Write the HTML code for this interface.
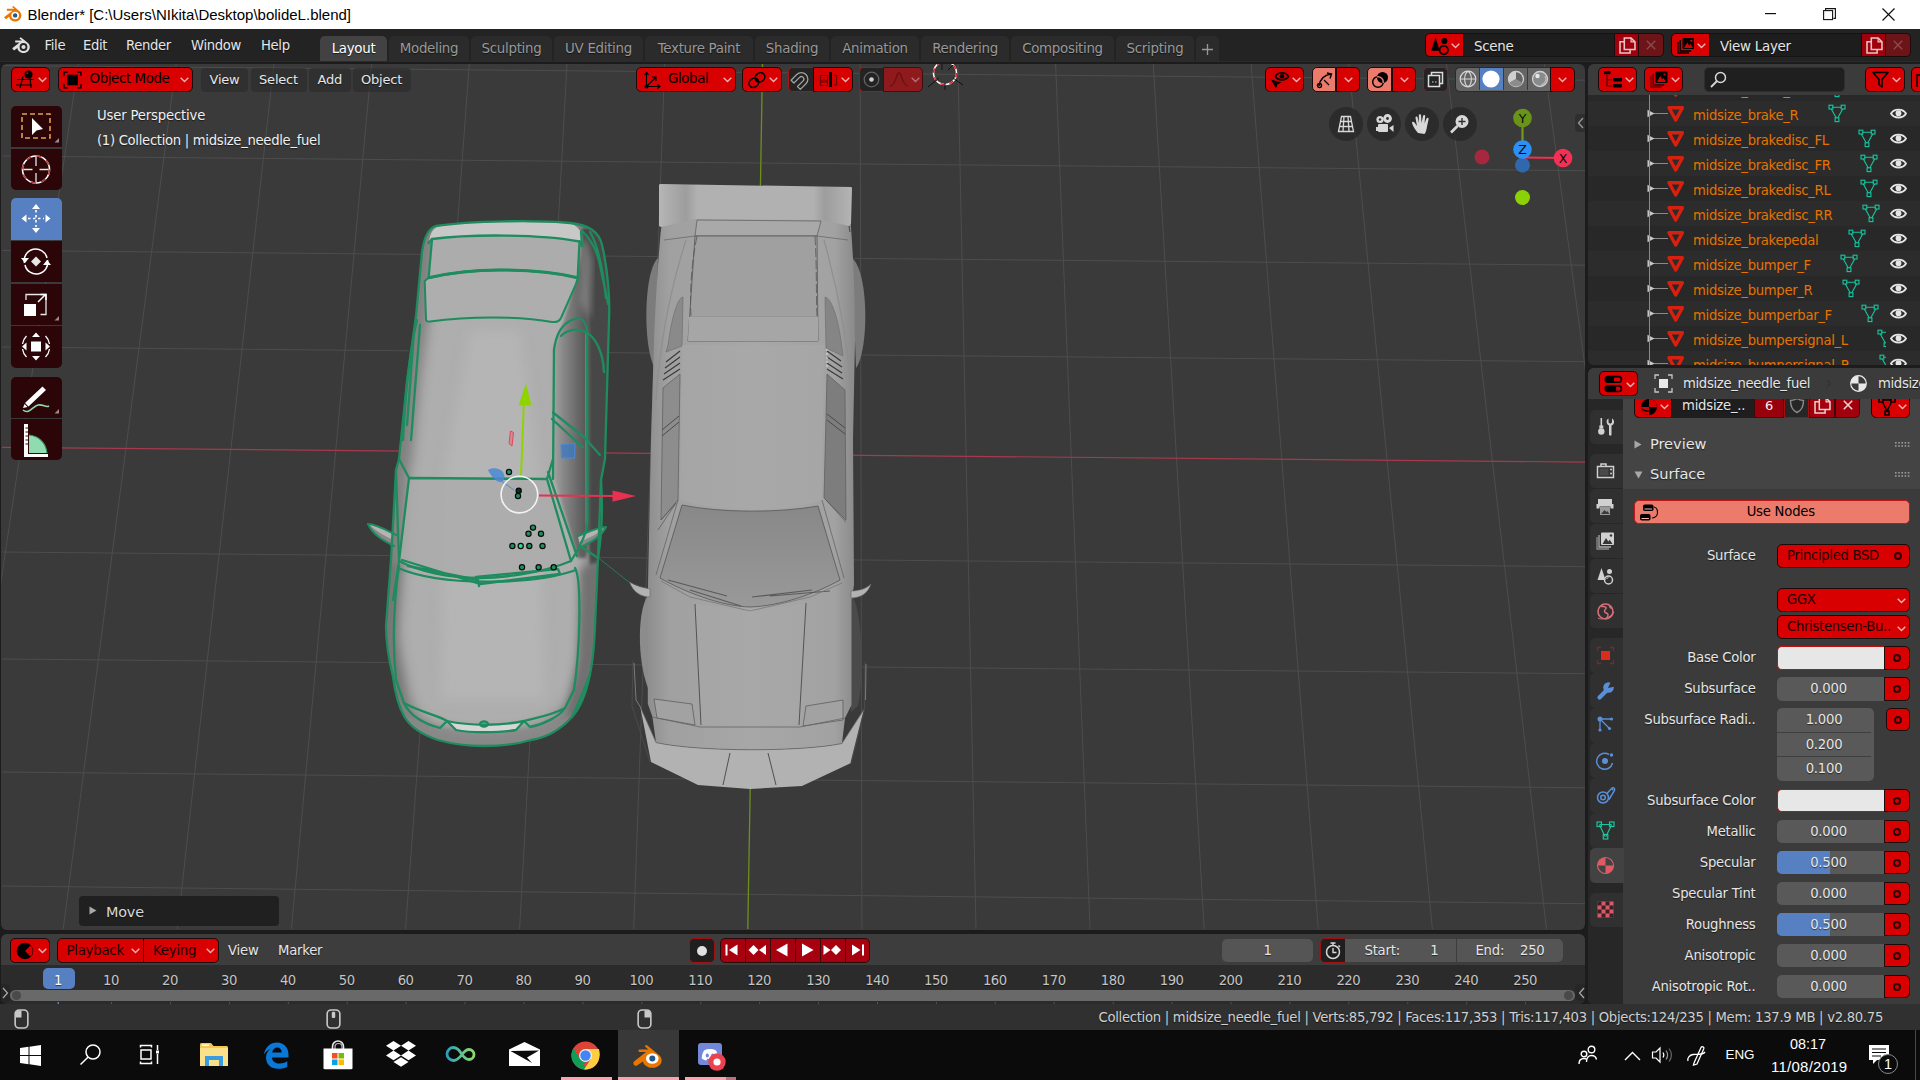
<!DOCTYPE html>
<html lang="en">
<head>
<meta charset="utf-8">
<title>Blender</title>
<style>
*{box-sizing:border-box;margin:0;padding:0}
html,body{width:1920px;height:1080px;overflow:hidden;background:#1c1c1c}
body{position:relative;font-family:"DejaVu Sans","Liberation Sans",sans-serif;font-size:13px;letter-spacing:-0.21px;color:#e6e6e6;-webkit-font-smoothing:antialiased}
.abs{position:absolute}
svg{position:absolute;overflow:visible}
.t{position:absolute;white-space:nowrap;line-height:16px}
.sh{text-shadow:0 1px 1px rgba(0,0,0,.55)}
/* title bar */
#title{left:0;top:0;width:1920px;height:29px;background:#fff;color:#000;font-family:"Liberation Sans",sans-serif;letter-spacing:0}
/* top bar */
#topbar{left:0;top:29px;width:1920px;height:33px;background:#232323}
.tab{position:absolute;top:7px;height:26px;background:#2b2b2b;border-radius:5px 5px 0 0;color:#989898;text-align:center;line-height:25px;font-size:13.4px;letter-spacing:-0.3px}
.tab.on{background:#424242;color:#fff}
.rb{position:absolute;background:#d80000;border:1px solid #1d0a0a;border-radius:5px;color:#000}
.mb{position:absolute;background:rgba(40,40,40,.55);border-radius:4px;color:#e6e6e6;text-align:center;line-height:23px;height:24px;top:68px}
/* viewport */
#vp{left:1px;top:64px;width:1584px;height:866px;background:#3a3a3a;border-radius:6px;overflow:hidden}
/* outliner */
#ol{left:1588px;top:64px;width:332px;height:301px;background:#282828;border-radius:6px 0 0 6px;overflow:hidden}
#olh{left:0;top:0;width:331px;height:31px;background:#3d3d3d}
.row{position:absolute;left:0;width:331px;height:25px}
.row.a{background:#2b2b2b}
.ot{position:absolute;left:104px;color:#e57300;line-height:25px;white-space:nowrap;font-size:13.2px;letter-spacing:-0.3px}
/* properties */
#pr{left:1588px;top:368px;width:332px;height:636px;background:#424242;border-radius:6px 0 0 6px;overflow:hidden}
.lab{position:absolute;right:165px;white-space:nowrap;line-height:22px;color:#e6e6e6;text-align:right}
.fld{position:absolute;left:187px;width:108px;height:22px;background:#595959;border-radius:4px 0 0 4px;text-align:center;line-height:22px;color:#e6e6e6;overflow:hidden}
.dot{position:absolute;left:295px;width:26px;height:22px;background:#d80000;border:1px solid #1d0a0a;border-left:none;border-radius:0 5px 5px 0}
.dot:after{content:"";position:absolute;left:7px;top:6px;width:8px;height:8px;border:1.6px solid #3a0000;border-radius:50%}
/* timeline */
#tl{left:1px;top:934px;width:1584px;height:70px;background:#2b2b2b;border-radius:6px;overflow:hidden}
#tlh{left:0;top:0;width:1584px;height:34px;background:#3d3d3d}
.fn{position:absolute;top:39px;color:#c8c8c8;font-size:14px;letter-spacing:-0.2px;line-height:16px;transform:translateX(-50%)}
/* status */
#st{left:0;top:1004px;width:1920px;height:26px;background:#303030}
/* taskbar */
#tb{left:0;top:1030px;width:1920px;height:50px;background:#0b0b0b;font-family:"Liberation Sans",sans-serif;letter-spacing:0;color:#fff}
</style>
</head>
<body>
<!-- TITLE BAR -->
<div id="title" class="abs">
<svg id="ticon" style="left:3px;top:6px" width="19" height="17" viewBox="0 0 20 18"><path d="M1 12 L10 5 H4 V3 H12 L9.5 1 L11 0 L18 6 C20 8.5 20 12 17.5 14.5 C15 17 10.5 17 8 14.5 C7 13.5 6.5 12.5 6.5 11.5 L3 14 Z" fill="#ea7600"/><circle cx="12.8" cy="10" r="4" fill="#fff"/><circle cx="12.8" cy="10" r="2.3" fill="#265787"/></svg>
<div class="t" style="left:27.5px;top:5px;font-size:15px;line-height:19px">Blender* [C:\Users\NIkita\Desktop\bolideL.blend]</div>
<svg style="left:1765px;top:13px" width="12" height="2"><rect width="11" height="1.2" fill="#111"/></svg>
<svg style="left:1823px;top:8px" width="13" height="13" viewBox="0 0 13 13" fill="none" stroke="#111" stroke-width="1.1"><rect x=".6" y="2.6" width="9" height="9"/><path d="M2.6 2.6V.6h9.8v9.8h-2"/></svg>
<svg style="left:1882px;top:8px" width="13" height="13" viewBox="0 0 13 13" stroke="#111" stroke-width="1.2"><path d="M.5.5l12 12M12.5.5l-12 12"/></svg>
</div>

<!-- TOP BAR -->
<div id="topbar" class="abs">
<!--TOPBAR-->
<svg style="left:11px;top:8px" width="20" height="17" viewBox="0 0 20 17"><path d="M1.2 11.2 L8.6 5.4 H4.2 V3.6 H11 L8.4 1.5 L9.8 .3 L17 6 C19.4 8.2 19.4 11.8 17 14.2 C14.6 16.6 10.4 16.6 8 14.2 C7 13.2 6.4 12.1 6.4 11 L3 13.6 Z" fill="#e0e0e0"/><circle cx="12.5" cy="10" r="3.9" fill="#232323"/><circle cx="12.5" cy="10" r="2.1" fill="#e0e0e0"/></svg>
<div class="t sh" style="left:44.5px;top:9px;font-size:13.2px;letter-spacing:-0.35px">File</div>
<div class="t sh" style="left:83px;top:9px;font-size:13.2px;letter-spacing:-0.35px">Edit</div>
<div class="t sh" style="left:126px;top:9px;font-size:13.2px;letter-spacing:-0.35px">Render</div>
<div class="t sh" style="left:191px;top:9px;font-size:13.2px;letter-spacing:-0.35px">Window</div>
<div class="t sh" style="left:261px;top:9px;font-size:13.2px;letter-spacing:-0.35px">Help</div>
<div class="tab sh on" style="left:320px;width:67px">Layout</div>
<div class="tab sh" style="left:389px;width:80px">Modeling</div>
<div class="tab sh" style="left:471px;width:81px">Sculpting</div>
<div class="tab sh" style="left:554px;width:89px">UV Editing</div>
<div class="tab sh" style="left:645px;width:108px">Texture Paint</div>
<div class="tab sh" style="left:755px;width:74px">Shading</div>
<div class="tab sh" style="left:831px;width:88px">Animation</div>
<div class="tab sh" style="left:921px;width:88px">Rendering</div>
<div class="tab sh" style="left:1011px;width:103px">Compositing</div>
<div class="tab sh" style="left:1116px;width:78px">Scripting</div>
<div class="tab" style="left:1196px;width:23px"><svg style="left:6px;top:8px" width="11" height="11" viewBox="0 0 11 11" stroke="#989898" stroke-width="1.3"><path d="M5.5 0v11M0 5.500h11"/></svg></div>
<div class="rb" style="left:1425px;top:4px;width:39px;height:24px;border-radius:5px 0 0 5px"><svg style="left:4px;top:2px" width="21" height="20" viewBox="0 0 18 17"><path d="M4.800 1L1 12.500h7.200z" fill="#000"/><circle cx="12.300" cy="4.300" r="2.600" fill="#000"/><circle cx="11.800" cy="12" r="3.600" fill="none" stroke="#000" stroke-width="1.500"/></svg><svg style="left:25px;top:9px" width="9" height="6" viewBox="0 0 9 6" fill="none" stroke="#f3b0b0" stroke-width="1.4"><path d="M.7.8l3.800 3.700L8.300.800"/></svg></div><div class="abs" style="left:1464px;top:4px;width:150px;height:24px;background:#1d1d1d;border-top:1px solid #141414;border-bottom:1px solid #141414"><div class="t sh" style="left:10px;top:4.500px;font-size:13.4px;letter-spacing:-.25px;color:#e6e6e6">Scene</div></div><div class="rb" style="left:1614px;top:4px;width:25px;height:24px;border-radius:0;background:#a0000c"><svg style="left:2.500px;top:2px" width="19" height="19" viewBox="0 0 16 16" fill="none" stroke="#e9c6c6" stroke-width="1.300"><path d="M5.300 11.300V1.700h5.700l3.300 3.300v6.300z"/><path d="M11 1.700V5h3.300" stroke-width="1"/><path d="M5.300 4.800H1.700v9.500h8.500v-3"/></svg></div><div class="rb" style="left:1639px;top:4px;width:25px;height:24px;border-radius:0 5px 5px 0;background:#6d1418;border-left:none"><svg style="left:7px;top:6px" width="10" height="10" viewBox="0 0 10 10" stroke="#8d4a4a" stroke-width="1.4"><path d="M.8.800l8.400 8.400M9.200.800L.8 9.200"/></svg></div>
<div class="rb" style="left:1671px;top:4px;width:39px;height:24px;border-radius:5px 0 0 5px"><svg style="left:5px;top:3px" width="18" height="17" viewBox="0 0 18 17"><path d="M1 5v11h11" fill="none" stroke="#000" stroke-width="1.300"/><path d="M3.200 3v11h11" fill="none" stroke="#000" stroke-width="1.300"/><rect x="5.500" y="1" width="11.500" height="11" rx="1" fill="#000"/><path d="M7 11l3.200-5.500 2 3 1.300-1.500 2.500 4z" fill="#d80000"/><circle cx="14.300" cy="3.800" r="1.100" fill="#d80000"/></svg><svg style="left:25px;top:9px" width="9" height="6" viewBox="0 0 9 6" fill="none" stroke="#f3b0b0" stroke-width="1.4"><path d="M.7.8l3.800 3.700L8.300.800"/></svg></div><div class="abs" style="left:1710px;top:4px;width:151px;height:24px;background:#1d1d1d;border-top:1px solid #141414;border-bottom:1px solid #141414"><div class="t sh" style="left:10px;top:4.500px;font-size:13.4px;letter-spacing:-.25px;color:#e6e6e6">View Layer</div></div><div class="rb" style="left:1861px;top:4px;width:25px;height:24px;border-radius:0;background:#a0000c"><svg style="left:2.500px;top:2px" width="19" height="19" viewBox="0 0 16 16" fill="none" stroke="#e9c6c6" stroke-width="1.300"><path d="M5.300 11.300V1.700h5.700l3.300 3.300v6.300z"/><path d="M11 1.700V5h3.300" stroke-width="1"/><path d="M5.300 4.800H1.700v9.500h8.500v-3"/></svg></div><div class="rb" style="left:1886px;top:4px;width:25px;height:24px;border-radius:0 5px 5px 0;background:#6d1418;border-left:none"><svg style="left:7px;top:6px" width="10" height="10" viewBox="0 0 10 10" stroke="#8d4a4a" stroke-width="1.4"><path d="M.8.800l8.400 8.400M9.200.800L.8 9.200"/></svg></div>
<!--/TOPBAR-->
</div>

<div id="tbline" class="abs" style="left:0;top:61px;width:1920px;height:1px;background:#2b2b2b"></div>
<!-- VIEWPORT -->
<div id="vp" class="abs">
<!--VIEWPORT-->
<div class="abs" style="left:-1px;top:-64px;width:1920px;height:1080px">
<svg style="left:0;top:0" width="1920" height="1080" viewBox="0 0 1920 1080">
<defs>
<linearGradient id="gL" x1="0" x2="1" y1="0" y2="0"><stop offset="0" stop-color="#8f8f8f"/><stop offset=".12" stop-color="#a6a6a6"/><stop offset=".5" stop-color="#adadad"/><stop offset=".72" stop-color="#9c9c9c"/><stop offset=".82" stop-color="#6f6f6f"/><stop offset=".9" stop-color="#4e4e4e"/><stop offset="1" stop-color="#6a6a6a"/></linearGradient>
<linearGradient id="gHood" x1="0" x2="1" y1="0" y2="0"><stop offset="0" stop-color="#8a8a8a"/><stop offset=".15" stop-color="#a9a9a9"/><stop offset=".55" stop-color="#b0b0b0"/><stop offset=".85" stop-color="#9a9a9a"/><stop offset="1" stop-color="#787878"/></linearGradient>
<linearGradient id="gR" x1="0" x2="1" y1="0" y2="0"><stop offset="0" stop-color="#8e8e8e"/><stop offset=".1" stop-color="#a0a0a0"/><stop offset=".5" stop-color="#a7a7a7"/><stop offset=".9" stop-color="#a2a2a2"/><stop offset="1" stop-color="#8a8a8a"/></linearGradient>
<linearGradient id="gW" x1="0" x2="1" y1="0" y2="0"><stop offset="0" stop-color="#b6b6b6"/><stop offset=".14" stop-color="#9d9d9d"/><stop offset=".2" stop-color="#b1b1b1"/><stop offset=".8" stop-color="#b1b1b1"/><stop offset=".86" stop-color="#9d9d9d"/><stop offset="1" stop-color="#b4b4b4"/></linearGradient>
<linearGradient id="gWS" x1="0" x2="0" y1="0" y2="1"><stop offset="0" stop-color="#888"/><stop offset="1" stop-color="#999"/></linearGradient>
</defs>
<path d="M-19.3 64L-165.1 929M78.4 64L-51.0 929M176.1 64L63.2 929M273.9 64L177.3 929M371.6 64L291.4 929M469.3 64L405.5 929M567.0 64L519.6 929M664.7 64L633.7 929M860.2 64L861.9 929M957.9 64L976.0 929M1055.6 64L1090.1 929M1153.3 64L1204.2 929M1251.1 64L1318.3 929M1348.8 64L1432.4 929M1446.5 64L1546.5 929M1544.2 64L1660.6 929M2 65.5L1586 80.2M2 156.0L1586 170.7M2 250.5L1586 265.2M2 347.0L1586 361.7M2 552.0L1586 566.7M2 659.0L1586 673.7M2 772.0L1586 787.8M2 886.0L1586 903.7" stroke="#4d4d4d" stroke-width="1" fill="none"/>
<path d="M2 447.3L1586 462.1" stroke="#a63a4d" stroke-width="1.2"/>
<path d="M762.5 64L747.8 929" stroke="#6d8f1e" stroke-width="1.3"/>
<g stroke-linejoin="round">
<path d="M658 258C643 272 643 350 655 368Z" fill="#7c7c7c"/><path d="M852 258C869 272 869 350 856 368Z" fill="#7c7c7c"/>
<path d="M649 594C637 608 637 660 648 688Z" fill="#8c8c8c"/><path d="M851 594C863 608 864 680 858 706L851 712Z" fill="#4a4a4a"/>
<path d="M662 216L850 216C853 250 855 290 855 340L853 440L854 585L851.500 600L851.500 705L845 718L842 743.500C800 752 700 752 656 742.600L652.400 716.700L647.800 703.700L647.800 600L648 585L651 440L654 340C656 290 659 250 662 216Z" fill="url(#gR)"/>
<path d="M640.400 707.400L656 742.600C700 752 800 752 842 743.500L864.400 709L851 763L802 786L750 789L698 785L651 762Z" fill="#b2b2b2"/>
<path d="M659 185C659 184 660 184 661 184L851 187C852 187 852 188 852 189L851 224L849 226L823 220L695 219L661 227L659 226Z" fill="url(#gW)"/>
<path d="M661 227L660 232M849 226L850 232" stroke="#444" stroke-width="1"/>
<path d="M697 220L821 221L817 236L695 236Z" fill="#a9a9a9" stroke="#5a5a5a" stroke-width=".7"/>
<path d="M695 236L817 236L818 341L688 341Z" fill="#a0a0a0" stroke="#555" stroke-width=".8"/>
<path d="M690 317L818 317" stroke="#8d8d8d" stroke-width="1"/><path d="M689 317h129v24h-130z" fill="#a6a6a6"/>
<path d="M697 236C690 270 690 300 691 316M815 236C817 270 816 300 817 316" stroke="#555" stroke-width=".8" fill="none" stroke-dasharray="9 3"/>
<path d="M664 240L695 236M848 240L817 236" stroke="#6a6a6a" stroke-width=".8"/>
<path d="M686 240C670 290 660 340 656 400M824 240C838 290 848 340 852 400" stroke="#8f8f8f" stroke-width="1.2" fill="none"/>
<path d="M683 297C678 298 672 315 668 345L666 352L682 346Z" fill="#8a8a8a" stroke="#6a6a6a" stroke-width=".6"/>
<path d="M825 297C831 298 838 315 842 348L843 356L826 348Z" fill="#858585" stroke="#6a6a6a" stroke-width=".6"/>
<path d="M666 362L680 351M665 368L680 357M664 374L680 363M663 380L680 369" stroke="#3a3a3a" stroke-width="1.2"/>
<path d="M827 351L841 361M827 357L842 367M827 363L842 373M827 369L843 379" stroke="#3a3a3a" stroke-width="1.2"/>
<path d="M827 349v20" stroke="#e0e0e0" stroke-width="1" stroke-dasharray="2 2"/>
<path d="M663 388L680 374L678 500L661 520Z" fill="#8d8d8d" stroke="#5c5c5c" stroke-width=".7"/>
<path d="M827 374L845 390L846 520L824 498Z" fill="#7d7d7d" stroke="#5c5c5c" stroke-width=".7"/>
<path d="M662 430L679 416M662 436L679 422M845 428L827 414M845 434L827 420" stroke="#4a4a4a" stroke-width="1"/>
<path d="M682 345L824 345L822 500C790 512 715 512 680 500Z" fill="#a9a9a9" opacity=".55"/>
<path d="M682 505C720 513 780 513 818 506L840 580C815 594 780 606 750 607C720 606 685 592 660 578Z" fill="url(#gWS)" stroke="#555" stroke-width=".8"/>
<path d="M678 500L656 575M822 500L844 578" stroke="#666" stroke-width=".8"/>
<path d="M661 520L676 503L658 530M846 522L826 500" stroke="#555" stroke-width=".7" fill="none"/>
<path d="M668 580L727 596M690 590L741 606M752 597L812 590M770 596L830 591" stroke="#5a5a5a" stroke-width="1.1"/>
<path d="M661 581L690 597L750 611L810 597L842 583" stroke="#777" stroke-width=".8" fill="none"/>
<path d="M695 604L750 611L806 603L799 725L701 725Z" fill="#a8a8a8" opacity=".6"/>
<path d="M695 604L701 725M806 603L799 725" stroke="#4a4a4a" stroke-width=".9"/>
<path d="M629.500 582C636 586 644 588 650 589L650 597C641 597 633 592 629.500 582Z" fill="#b2b2b2" stroke="#666" stroke-width=".6"/>
<path d="M871 584C866 589 858 591 851 591L851 598C861 598 868 593 871 584Z" fill="#b2b2b2" stroke="#666" stroke-width=".6"/>
<path d="M654 699L692 704L695 725L657 718Z" fill="#a2a2a2" stroke="#555" stroke-width=".7"/>
<path d="M806 706L843 700L843 720L803 726Z" fill="#a2a2a2" stroke="#555" stroke-width=".7"/>
<path d="M652.400 717L700 727L800 727L845 718M656 742.600C700 752 800 752 842 743.500" stroke="#666" stroke-width=".8" fill="none"/>
<path d="M640.400 707.400L656 742.600M842 743.500L864.400 709" stroke="#777" stroke-width=".7" fill="none"/>
<path d="M730 753L723 785M768 753L776 785" stroke="#444" stroke-width=".9"/>
<path d="M633 661L632 706L650 762M865 662L864.500 709L851 763" stroke="#484848" stroke-width="1.200" fill="none"/>
<path d="M634 663L636 700L641 708M866 664L865.500 700" stroke="#8a8a8a" stroke-width=".8" fill="none"/>
</g>
<g>
<defs><clipPath id="cpL"><path d="M436 226C470 220.500 540 220 570 223C590 225 599 232 602 245C608 270 610 300 609 320L605 459L601 480L598 558L595 626C594 650 592 665 590 674C586 695 580 708 572 717C560 730 545 738 531 740C515 745 500 746 484 746C468 746 452 744 438 740C420 734 410 727 404 716C398 705 395 692 393 677C389 660 386 645 386 626L391 560L396 470L399 459L407 381L416 316L422 252C424 238 428 228 436 226Z"/></clipPath><filter id="bl7" x="-20%" y="-20%" width="140%" height="140%"><feGaussianBlur stdDeviation="6"/></filter><filter id="bl3" x="-20%" y="-20%" width="140%" height="140%"><feGaussianBlur stdDeviation="3.500"/></filter><filter id="bl2" x="-20%" y="-20%" width="140%" height="140%"><feGaussianBlur stdDeviation="1.800"/></filter></defs>
<path d="M368 524C376 524 388 531 396 535L395 547C384 541 373 535 368 524Z" fill="#b4b4b4"/><path d="M368 524C374 534 384 541 395 547L396 541C386 537 376 531 368 524Z" fill="#8a8a8a"/>
<path d="M606 527C598 527 586 533 578 536L580 547C591 542 601 537 606 527Z" fill="#b4b4b4"/><path d="M606 527C601 537 591 542 580 547L579 542C590 538 599 533 606 527Z" fill="#8a8a8a"/>
<path d="M436 226C470 220.500 540 220 570 223C590 225 599 232 602 245C608 270 610 300 609 320L605 459L601 480L598 558L595 626C594 650 592 665 590 674C586 695 580 708 572 717C560 730 545 738 531 740C515 745 500 746 484 746C468 746 452 744 438 740C420 734 410 727 404 716C398 705 395 692 393 677C389 660 386 645 386 626L391 560L396 470L399 459L407 381L416 316L422 252C424 238 428 228 436 226Z" fill="#aeaeae"/>
<g clip-path="url(#cpL)">
<path d="M436 226C470 220.500 540 220 570 223C590 225 599 232 602 245C608 270 610 300 609 320L605 459L601 480L598 558L595 626C594 650 592 665 590 674C586 695 580 708 572 717C560 730 545 738 531 740C515 745 500 746 484 746C468 746 452 744 438 740C420 734 410 727 404 716C398 705 395 692 393 677C389 660 386 645 386 626L391 560L396 470L399 459L407 381L416 316L422 252C424 238 428 228 436 226Z" fill="none" stroke="#5c5c5c" stroke-width="26" opacity=".55" filter="url(#bl7)"/>
<path d="M470 330L520 330L540 470L545 700L440 700L445 470Z" fill="#bcbcbc" opacity=".5" filter="url(#bl7)"/>
<defs><linearGradient id="gGl" gradientUnits="userSpaceOnUse" x1="553" x2="586" y1="0" y2="0"><stop offset="0" stop-color="#a2a2a2"/><stop offset=".35" stop-color="#858585"/><stop offset="1" stop-color="#565656"/></linearGradient></defs>
<path d="M582 228L590 228L603 240L612 305L608 460L604 500L601 562L590 565L588 530L588 330L582 260Z" fill="#474747" filter="url(#bl2)"/>
<path d="M570 300L582 250L590 330L590 530L586 558L578 558L554 478L553 350L562 326Z" fill="url(#gGl)" filter="url(#bl2)"/>
<path d="M586 332L587.500 526" stroke="#a4a4a4" stroke-width="3" filter="url(#bl2)" opacity=".8"/>
<path d="M578 300C582 280 582 262 580 246L586 236L592 262L590 320Z" fill="#7a7a7a" filter="url(#bl3)"/>
<path d="M600 560L596 640L590 690L576 720L566 712L578 660L580 570Z" fill="#6a6a6a" opacity=".75" filter="url(#bl3)"/>
<path d="M384 560L399 566L394 640L404 703L396 700L384 640Z" fill="#707070" opacity=".6" filter="url(#bl3)"/>
<path d="M404 716L440 728L484 734L530 728L572 717L560 750L410 750Z" fill="#8a8a8a" opacity=".7" filter="url(#bl2)"/>
<path d="M429 243C430 232 434 227 440 226C470 221 540 221 572 224C580 227 583 235 582 243C540 234 470 234 429 243Z" fill="#c8c8c8"/>
<path d="M432 239C470 234 540 234 579.500 241.500L577.700 277.800C550 271 520 270 499 270C470 270 445 274 428.600 277.800Z" fill="#acacac"/>
<path d="M424.700 281L428.600 277.800C445 274 470 270 499 270C520 270 550 271 577.700 277.800L576 284L561 318C559 322 556 322.500 552 322C520 316 470 316 430 321.500C427 322 426 321 426 319Z" fill="#aeaeae"/>
<path d="M409 478L547 479L571 561C540 574 500 578 479 578C450 578 420 572 399 561Z" fill="#ababab" opacity=".8"/>
</g>
<path d="M447 721C470 726 500 726 524 721L516 730C500 733 470 733 456 730Z" fill="#d6d6d6"/>
<path d="M606 527C598 527 586 533 578 536L580 547C591 542 601 537 606 527Z" fill="#b4b4b4"/><path d="M606 527C601 537 591 542 580 547L579 542C590 538 599 533 606 527Z" fill="#8a8a8a"/>
<path d="M368 524C376 524 388 531 396 535M368 524C373 535 384 541 394 546M606 527C598 527 586 533 578 536M606 527C601 537 591 542 581 547" stroke="#1e8c5f" stroke-width="2" fill="none" stroke-linecap="round"/>
<path d="M436 226C470 220.500 540 220 570 223C590 225 599 232 602 245C608 270 610 300 609 320L605 459L601 480L598 558L595 626C594 650 592 665 590 674C586 695 580 708 572 717C560 730 545 738 531 740C515 745 500 746 484 746C468 746 452 744 438 740C420 734 410 727 404 716C398 705 395 692 393 677C389 660 386 645 386 626L391 560L396 470L399 459L407 381L416 316L422 252C424 238 428 228 436 226Z" stroke="#1e8c5f" stroke-width="2.300" fill="none" stroke-linejoin="round" stroke-linecap="round"/>
<g stroke="#1e8c5f" stroke-width="2.300" fill="none" stroke-linejoin="round" stroke-linecap="round">
<path d="M432 239C470 234 540 234 579.500 241.500L577.700 277.800C550 271 520 270 499 270C470 270 445 274 428.600 277.800Z"/>
<path d="M428.600 277.800L424.700 281L426 319C426 321 427 322 430 321.500C470 316 520 316 552 322C556 322.500 559 322 561 318L576 284L577.700 277.800" stroke-width="2"/>
<path d="M428.600 277.800C445 274 470 270 499 270C520 270 550 271 577.700 277.800" stroke-width="3"/>
<path d="M428.500 243L432 239M579.500 241.500L582 246L581 232"/>
<path d="M582 231C592 240 598 252 601 270C604 285 607 296 608 304M590 232C598 245 603 270 606 298"/>
<path d="M553 479L554 350C556 334 562 324 572 320C582 315 587 322 587 335L587.500 520C587 530 584 538 580 545"/>
<path d="M561 336C568 329 578 328 586 332C596 338 603 352 604 372"/>
<path d="M553 412.500L584 437L600 455M552 419L583 447.500"/>
<path d="M417 320C410 350 405 400 403 440M414 332L407 425M420 325L411 440"/>
<path d="M399 459L409 478M396 470L399 561L393 600"/>
<path d="M409 478L547 479L571 561C540 574 500 578 479 578C450 578 420 572 399 561Z"/>
<path d="M547 479L553 459M571 561L580 546L598 558M548 472L577 556"/>
<path d="M402 560L480 584M408 566L478 580L479 586M476 577L558 569L560 574L480 584"/>
<path d="M399 566C394 600 392 640 396 680L404 703M575 568C582 580 580 650 574 690L565 708"/>
<path d="M398 568C440 586 530 586 576 570"/>
<path d="M404 703C420 712 440 716 447 721L440 728C425 724 410 716 404 703Z"/>
<path d="M565 708C550 716 535 718 524 721L530 727C545 724 560 716 565 708Z"/>
<path d="M447 721C470 726 500 726 524 721L516 730C500 733 470 733 456 730Z"/>
<ellipse cx="484" cy="724" rx="4" ry="2.500"/>
<path d="M590 674C584 690 580 700 572 717"/>
<path d="M601 480C603 510 601 540 598 558"/>
</g>
<path d="M598.5 558L630 583" stroke="#1e8c5f" stroke-width=".8"/>
</g>
<path d="M561 444.500L575 443.500L574.500 458L561.500 458Z" fill="#3b79c4" fill-opacity=".75" stroke="#4a8ad8" stroke-width="1"/>
<path d="M510.500 431L513.500 432.500L512 446L509 443.500Z" fill="#e8455a" fill-opacity=".35" stroke="#e8455a" stroke-width="1"/>
<path d="M488 470C492 467 500 468 503 472C506 478 504 482 500 482C496 482 491 476 488 470Z" fill="#4a8ad4" fill-opacity=".85"/>
<path d="M497 478L514 490" stroke="#4a8ad4" stroke-width="1"/>
<path d="M521 476L523.800 405" stroke="#8fd400" stroke-width="2"/><path d="M526 383.500L518.500 405.500L531.500 405.500Z" fill="#8fd400"/>
<path d="M539 495.500L614 496" stroke="#e8304f" stroke-width="2"/><path d="M636 496L612.500 490.500L612.500 501.800Z" fill="#e8304f"/>
<circle cx="519.400" cy="494.600" r="18.300" fill="none" stroke="#f2f2f2" stroke-width="1.600"/>
<circle cx="509" cy="472" r="2.600" fill="#1f8f5f" stroke="#0a0a0a" stroke-width="1.200"/>
<circle cx="518.7" cy="490.7" r="2.600" fill="#0a3020" stroke="#0a0a0a" stroke-width="1.200"/>
<circle cx="518" cy="496" r="2.600" fill="#1f8f5f" stroke="#0a0a0a" stroke-width="1.200"/>
<circle cx="533" cy="527.6" r="2.600" fill="#1f8f5f" stroke="#0a0a0a" stroke-width="1.200"/>
<circle cx="528.5" cy="533.8" r="2.600" fill="#1f8f5f" stroke="#0a0a0a" stroke-width="1.200"/>
<circle cx="541" cy="533.8" r="2.600" fill="#1f8f5f" stroke="#0a0a0a" stroke-width="1.200"/>
<circle cx="512.4" cy="546" r="2.600" fill="#1f8f5f" stroke="#0a0a0a" stroke-width="1.200"/>
<circle cx="520.7" cy="546" r="2.600" fill="#2fd98f" stroke="#0a0a0a" stroke-width="1.200"/>
<circle cx="529.3" cy="546" r="2.600" fill="#1f8f5f" stroke="#0a0a0a" stroke-width="1.200"/>
<circle cx="542.5" cy="546" r="2.600" fill="#1f8f5f" stroke="#0a0a0a" stroke-width="1.200"/>
<circle cx="522" cy="567.2" r="2.600" fill="#1f8f5f" stroke="#0a0a0a" stroke-width="1.200"/>
<circle cx="538.6" cy="567.2" r="2.600" fill="#1f8f5f" stroke="#0a0a0a" stroke-width="1.200"/>
<circle cx="553.7" cy="567.2" r="2.600" fill="#1f8f5f" stroke="#0a0a0a" stroke-width="1.200"/>
<g transform="translate(945 73)"><circle r="11.500" fill="none" stroke="#fff" stroke-width="1.500"/><circle r="11.500" fill="none" stroke="#e02020" stroke-width="1.500" stroke-dasharray="4.500 4.530"/><path d="M-17 14L-6 5M18 12L8 5M0 10v7M-3-3v-6M8-8L3-3" stroke="#111" stroke-width="1"/></g>
</svg>
<div class="rb" style="left:11px;top:67px;width:39px;height:24.500px;"><svg style="left:4px;top:2px" width="20" height="19" viewBox="0 0 20 19"><path d="M1 9.500h17M0 15h16M7 6.500L4 18M14 6.500l1 11.500" stroke="#000" stroke-width="1.200" fill="none"/><circle cx="12.500" cy="4.500" r="4" fill="#000"/><circle cx="11.300" cy="3.300" r="1" fill="#d80000"/></svg><svg style="left:26px;top:9px" width="9" height="6" viewBox="0 0 9 6" fill="none" stroke="#f3b0b0" stroke-width="1.400"><path d="M.7.800l3.800 3.700L8.300.800"/></svg></div>
<div class="rb" style="left:57.5px;top:67px;width:135.5px;height:24.500px;"><svg style="left:4.500px;top:3px" width="19" height="18" viewBox="0 0 18 17"><rect x="4" y="3.500" width="10" height="10" fill="#000"/><path d="M1 4.500V1h3.500M13.500 1H17v3.500M17 12.500V16h-3.500M4.500 16H1v-3.500" stroke="#000" stroke-width="1.300" fill="none"/></svg><div class="t" style="left:31px;top:3px;font-size:13.400px;letter-spacing:-.4px">Object Mode</div><svg style="left:121px;top:9px" width="9" height="6" viewBox="0 0 9 6" fill="none" stroke="#f3b0b0" stroke-width="1.400"><path d="M.7.800l3.800 3.700L8.300.800"/></svg></div>
<div class="mb sh" style="left:201px;width:47px">View</div>
<div class="mb sh" style="left:250.5px;width:56.0px">Select</div>
<div class="mb sh" style="left:309px;width:41.5px">Add</div>
<div class="mb sh" style="left:352.5px;width:58.0px">Object</div>
<div class="rb" style="left:636px;top:67px;width:99.5px;height:24.500px;"><svg style="left:6px;top:3px" width="19" height="18" viewBox="0 0 19 18" fill="none" stroke="#000" stroke-width="1.100"><path d="M3.500 16V1.500M1.500 4L3.500 1.500 5.500 4M3.500 15.500h13.500M14.500 13.500l2.500 2L14.500 17.500M4 15L12.500 6.500M9 6H13V10"/><circle cx="3.500" cy="15.500" r="1.500" fill="none"/></svg><div class="t" style="left:31px;top:3px;font-size:13.400px;letter-spacing:-.4px">Global</div><svg style="left:86px;top:9px" width="9" height="6" viewBox="0 0 9 6" fill="none" stroke="#f3b0b0" stroke-width="1.400"><path d="M.7.800l3.800 3.700L8.300.800"/></svg></div>
<div class="rb" style="left:742px;top:67px;width:39.5px;height:24.500px;"><svg style="left:4px;top:3px" width="20" height="18" viewBox="0 0 20 18" fill="none" stroke="#000" stroke-width="1.600"><ellipse cx="6.800" cy="11.800" rx="5" ry="4.300" transform="rotate(-35 6.800 11.800)"/><ellipse cx="13" cy="6.300" rx="5" ry="4.300" transform="rotate(-35 13 6.300)"/><circle cx="9.900" cy="9" r="1.600" fill="#000" stroke="none"/></svg><svg style="left:26px;top:9px" width="9" height="6" viewBox="0 0 9 6" fill="none" stroke="#f3b0b0" stroke-width="1.400"><path d="M.7.800l3.800 3.700L8.300.800"/></svg></div>
<div class="abs" style="left:788px;top:67px;width:25px;height:24.500px;background:#232323;border:1px solid #b01010;border-right:none;border-radius:5px 0 0 5px"><svg style="left:3px;top:3px" width="18" height="17" viewBox="0 0 18 17" fill="none" stroke="#a0a0a0" stroke-width="1.300" stroke-linejoin="round"><path transform="rotate(-135 9 8.500)" d="M2.500 1v8a6.500 6.500 0 0 0 13 0V1h-4v8a2.500 2.500 0 0 1-5 0V1z"/></svg></div>
<div class="rb" style="left:812.5px;top:67px;width:40.5px;height:24.500px;border-radius:0 5px 5px 0"><svg style="left:5px;top:3px" width="20" height="17" viewBox="0 0 20 17" fill="none"><path d="M1.500 4.500h7v10h-7zM3 12V9M5 12V8M7 12V9" stroke="#7a0000" stroke-width="1.200"/><rect x="10" y="1" width="3" height="15" fill="#000"/><path d="M15 4.500h2.500v9.500H15" stroke="#7a0000" stroke-width="1.200"/></svg><svg style="left:27px;top:9px" width="9" height="6" viewBox="0 0 9 6" fill="none" stroke="#f3b0b0" stroke-width="1.400"><path d="M.7.800l3.800 3.700L8.300.800"/></svg></div>
<div class="abs" style="left:859px;top:67px;width:24px;height:24.500px;background:#232323;border:1px solid #b01010;border-right:none;border-radius:5px 0 0 5px"><svg style="left:2px;top:2px" width="19" height="19" viewBox="0 0 19 19"><circle cx="9.500" cy="9.500" r="7.300" fill="none" stroke="#626262" stroke-width="1.300"/><circle cx="9.500" cy="9.500" r="2.300" fill="#d0d0d0"/></svg></div>
<div class="abs" style="left:883px;top:67px;width:40px;height:24.500px;background:#8f1a1d;border:1px solid #3a1010;border-radius:0 5px 5px 0"><svg style="left:6px;top:4px" width="18" height="15" viewBox="0 0 18 15" fill="none" stroke="#6a1010" stroke-width="1.400"><path d="M0 14C6 14 6 1 9 1s3 13 9 13"/></svg><svg style="left:27px;top:9px" width="9" height="6" viewBox="0 0 9 6" fill="none" stroke="#b87070" stroke-width="1.400"><path d="M.7.800l3.800 3.700L8.300.800"/></svg></div>
<div class="rb" style="left:1265px;top:67px;width:39px;height:24.500px;"><svg style="left:4px;top:2px" width="20" height="19" viewBox="0 0 20 19"><path d="M5.500 6.500C8 1.500 15.500 1.500 18.500 6.500 15.500 11 8 11 5.500 6.500Z" fill="none" stroke="#000" stroke-width="1.600"/><circle cx="12" cy="6.300" r="2.300" fill="#000"/><path d="M1 9.500l10.500 3-4 1.800 -1.500 4.200z" fill="#000"/></svg><svg style="left:26px;top:9px" width="9" height="6" viewBox="0 0 9 6" fill="none" stroke="#f3b0b0" stroke-width="1.400"><path d="M.7.800l3.800 3.700L8.300.800"/></svg></div>
<div class="rb" style="left:1311.5px;top:67px;width:24.5px;height:24.500px;background:#ec7b6c;border-radius:5px 0 0 5px"><svg style="left:3px;top:3px" width="18" height="18" viewBox="0 0 18 18" fill="none" stroke="#000" stroke-width="1.400"><path d="M3 15C4 8 8 4 15 3M11 2l4.500 1L14 7.500"/><circle cx="3.500" cy="14.500" r="2" /><path d="M8 9l5 5" stroke-width="1.200"/></svg></div>
<div class="rb" style="left:1335.5px;top:67px;width:24.5px;height:24.500px;border-radius:0 5px 5px 0"><svg style="left:7px;top:9px" width="9" height="6" viewBox="0 0 9 6" fill="none" stroke="#f3b0b0" stroke-width="1.400"><path d="M.7.800l3.800 3.700L8.300.800"/></svg></div>
<div class="rb" style="left:1367px;top:67px;width:25px;height:24.500px;background:#ec7b6c;border-radius:5px 0 0 5px"><svg style="left:3px;top:3px" width="18" height="18" viewBox="0 0 18 18"><defs><clipPath id="ovc"><circle cx="11.500" cy="6.500" r="5.500"/></clipPath></defs><circle cx="11.500" cy="6.500" r="5.500" fill="#000"/><circle cx="7" cy="11" r="5.300" fill="none" stroke="#000" stroke-width="1.500"/><circle cx="7" cy="11" r="5.300" fill="none" stroke="#ec7b6c" stroke-width="1.500" clip-path="url(#ovc)"/></svg></div>
<div class="rb" style="left:1391.5px;top:67px;width:24.5px;height:24.500px;border-radius:0 5px 5px 0"><svg style="left:7px;top:9px" width="9" height="6" viewBox="0 0 9 6" fill="none" stroke="#f3b0b0" stroke-width="1.400"><path d="M.7.800l3.800 3.700L8.300.800"/></svg></div>
<div class="abs" style="left:1423px;top:67px;width:24.500px;height:24.500px;background:#232323;border:1px solid #b01010;border-radius:5px"><svg style="left:3px;top:3px" width="17" height="17" viewBox="0 0 17 17" fill="none" stroke="#ddd" stroke-width="1.500"><path d="M4.500 4.500V1.500h11v11h-3"/><rect x="1.500" y="4.500" width="11" height="11"/><path d="M5 11h1.500M8 11h1.500" stroke-width="1.200"/></svg></div>
<div class="abs" style="left:1454.500px;top:67px;width:96.500px;height:24.500px;background:#656565;border:1px solid #2a2a2a;border-right:none;border-radius:5px 0 0 5px;overflow:hidden"><div class="abs" style="left:23px;top:0;width:24px;height:22px;background:#5680c2"></div><div class="abs" style="left:23px;top:0;width:1px;height:22px;background:#3a3a3a"></div><div class="abs" style="left:47px;top:0;width:1px;height:22px;background:#3a3a3a"></div><div class="abs" style="left:71px;top:0;width:1px;height:22px;background:#3a3a3a"></div><svg style="left:3px;top:2px" width="18" height="18" viewBox="0 0 18 18" fill="none" stroke="#d8d8d8" stroke-width="1.200"><circle cx="9" cy="9" r="7.800"/><path d="M1.200 9h15.600M9 1.200C4.500 4 4.500 14 9 16.800M9 1.200C13.500 4 13.500 14 9 16.800" stroke-width="1.100"/></svg><svg style="left:26.500px;top:2px" width="18" height="18" viewBox="0 0 18 18"><circle cx="9" cy="9" r="8.600" fill="#fff"/></svg><svg style="left:51px;top:2px" width="18" height="18" viewBox="0 0 18 18"><circle cx="9" cy="9" r="7.500" fill="none" stroke="#d0d0d0" stroke-width="1.300"/><path d="M9 9V1.500A7.500 7.500 0 0 0 2.500 12.800Z" fill="#d0d0d0"/><path d="M9 9L15.500 12.800A7.500 7.500 0 0 1 2.500 12.800Z" fill="#8c8c8c"/></svg><svg style="left:75px;top:2px" width="18" height="18" viewBox="0 0 18 18"><circle cx="9" cy="9" r="7.500" fill="#8a8a8a" stroke="#d0d0d0" stroke-width="1.300"/><circle cx="6.500" cy="6" r="2.200" fill="#e8e8e8"/><path d="M14 6a6 6 0 0 1-4 9" stroke="#bdbdbd" stroke-width="1.200" fill="none"/></svg></div>
<div class="rb" style="left:1550px;top:67px;width:25px;height:24.500px;border-radius:0 5px 5px 0"><svg style="left:7px;top:9px" width="9" height="6" viewBox="0 0 9 6" fill="none" stroke="#f3b0b0" stroke-width="1.400"><path d="M.7.800l3.800 3.700L8.300.800"/></svg></div>
<div class="t sh" style="left:97px;top:108px;font-size:13.200px;letter-spacing:-.15px;color:#f0f0f0">User Perspective</div>
<div class="t sh" style="left:97px;top:133px;font-size:13.200px;letter-spacing:-.3px;color:#f0f0f0">(1) Collection | midsize_needle_fuel</div>
<div class="abs" style="left:11px;top:105.8px;width:51px;height:41.300px;background:#2b0507;border-radius:5px 5px 0 0"><svg style="left:0;top:0" width="51" height="41" viewBox="0 0 51 41"><rect x="11" y="8" width="28" height="24" fill="none" stroke="#e0a050" stroke-width="1.600" stroke-dasharray="5 3"/><path d="M21 12v17l4.500-4.500L32 23z" fill="#fff"/><path d="M48 32v4.500h-4.500z" fill="#9a8a8a"/></svg></div>
<div class="abs" style="left:11px;top:148.5px;width:51px;height:41.300px;background:#2b0507;border-radius:0 0 5px 5px"><svg style="left:0;top:0" width="51" height="41" viewBox="0 0 51 41"><circle cx="25" cy="20.500" r="13.500" fill="none" stroke="#fff" stroke-width="1.600"/><circle cx="25" cy="20.500" r="13.500" fill="none" stroke="#b04040" stroke-width="1.600" stroke-dasharray="5.300 5.300"/><path d="M25 8v9M25 24v9M12.500 20.500h9M28.500 20.500h9" stroke="#e8e8e8" stroke-width="1.300"/></svg></div>
<div class="abs" style="left:11px;top:198.3px;width:51px;height:41.300px;background:#5680c2;border-radius:5px 5px 0 0"><svg style="left:0;top:0" width="51" height="41" viewBox="0 0 51 41"><path d="M25 6l-4 5h8zM25 35l-4-5h8zM10.500 20.500l5-4v8zM39.500 20.500l-5-4v8z" fill="#fff"/><path d="M25 12v17M17 20.500h16" stroke="#fff" stroke-width="1.600" stroke-dasharray="2.500 2.500"/></svg></div>
<div class="abs" style="left:11px;top:241px;width:51px;height:41.300px;background:#2b0507;border-radius:0"><svg style="left:0;top:0" width="51" height="41" viewBox="0 0 51 41"><path d="M13.500 22A11.500 11.500 0 0 1 36 17M36.500 19A11.500 11.500 0 0 1 14 24" fill="none" stroke="#fff" stroke-width="1.500"/><path d="M10 17h8l-4 5zM32 24h8l-4-5z" fill="#fff" transform="translate(0 0)"/><path d="M25 15.500l5 5-5 5-5-5z" fill="#e8e8e8"/></svg></div>
<div class="abs" style="left:11px;top:283.7px;width:51px;height:41.300px;background:#2b0507;border-radius:0"><svg style="left:0;top:0" width="51" height="41" viewBox="0 0 51 41"><rect x="13" y="20" width="12" height="12" fill="#fff"/><path d="M15 16V10.500h20v20H29.500" fill="none" stroke="#e8e8e8" stroke-width="1.300"/><path d="M27 18l7-7M29.500 10.500H35V16" fill="none" stroke="#fff" stroke-width="1.500"/><path d="M48 32v4.500h-4.500z" fill="#9a8a8a"/></svg></div>
<div class="abs" style="left:11px;top:326.3px;width:51px;height:41.300px;background:#2b0507;border-radius:0 0 5px 5px"><svg style="left:0;top:0" width="51" height="41" viewBox="0 0 51 41"><rect x="20" y="15.500" width="10" height="10" fill="#fff"/><path d="M15.500 10A14 14 0 0 0 11.500 18M34.500 10A14 14 0 0 1 38.500 18M38.500 23A14 14 0 0 1 34.500 31M15.500 31A14 14 0 0 1 11.500 23" fill="none" stroke="#fff" stroke-width="1.300"/><path d="M25 6.500l-4 4.500h8zM25 34.500l-4-4.500h8zM11 20.500l4.500-4v8zM39 20.500l-4.500-4v8z" fill="#fff"/></svg></div>
<div class="abs" style="left:11px;top:376.5px;width:51px;height:41.300px;background:#2b0507;border-radius:5px 5px 0 0"><svg style="left:0;top:0" width="51" height="41" viewBox="0 0 51 41"><path d="M14 26l3.500 3.500L35 13l-3.500-3.500zM12 31l1.500-4 3 3z" fill="#fff"/><path d="M12 33c6 5 10-4 15-5s8 3 11 1" fill="none" stroke="#8fd9a8" stroke-width="1.600"/><path d="M48 32v4.500h-4.500z" fill="#9a8a8a"/></svg></div>
<div class="abs" style="left:11px;top:419.2px;width:51px;height:41.300px;background:#2b0507;border-radius:0 0 5px 5px"><svg style="left:0;top:0" width="51" height="41" viewBox="0 0 51 41"><path d="M13 5h4v30h20v3H13z" fill="#fff"/><path d="M14.500 9h3M14.500 13h3M14.500 17h3M14.500 21h3M14.500 25h3M21 35v-2M25 35v-2M29 35v-2M33 35v-2" stroke="#2b0507" stroke-width="1"/><path d="M18 16C28 17 35 24 36 34H18z" fill="#8fdcb0"/><path d="M18 16C28 17 35 24 36 34" fill="none" stroke="#3a8f68" stroke-width="1.200"/></svg></div>
<div class="abs" style="left:1329px;top:107px;width:34px;height:34px;border-radius:50%;background:rgba(38,38,38,.72)"><svg style="left:0;top:0" width="34" height="34" viewBox="-17 -17 34 34"><path d="M-7.500 7.500L-4.500-7.500h9L7.500 7.500zM-6.500 2.500h13M-5.500-2.500h11M-2-7.500L-3 7.500M2-7.500L3 7.500" fill="none" stroke="#d8d8d8" stroke-width="1.300"/></svg></div>
<div class="abs" style="left:1367px;top:107px;width:34px;height:34px;border-radius:50%;background:rgba(38,38,38,.72)"><svg style="left:0;top:0" width="34" height="34" viewBox="-17 -17 34 34"><circle cx="-4" cy="-4.500" r="3.600" fill="#d8d8d8"/><circle cx="3.500" cy="-5.500" r="4.400" fill="#d8d8d8"/><circle cx="-4" cy="-4.500" r="1.200" fill="#303030"/><circle cx="3.500" cy="-5.500" r="1.400" fill="#303030"/><rect x="-6" y="0" width="10" height="8" rx="1" fill="#d8d8d8"/><path d="M5 4l4.500-3v7z" fill="#d8d8d8"/><path d="M-8 3h2v4h-2z" fill="#d8d8d8"/></svg></div>
<div class="abs" style="left:1405px;top:107px;width:34px;height:34px;border-radius:50%;background:rgba(38,38,38,.72)"><svg style="left:0;top:0" width="34" height="34" viewBox="-17 -17 34 34"><path d="M-4 9C-7 6-9 2-10-1c0-1.500 1.500-1.500 2.500-.5L-5 2-6.500-6c-.3-1.500 1.700-2 2.100-.5L-3-1-3.200-8.500c0-1.600 2.200-1.600 2.300 0L-.5-1 1-8c.3-1.500 2.400-1.200 2.200.4L2.500-.5 4.500-5.500c.6-1.400 2.500-.8 2.100.7L5 2.500C4.500 6 4 8 2.500 10Z" fill="#d8d8d8"/></svg></div>
<div class="abs" style="left:1443px;top:107px;width:34px;height:34px;border-radius:50%;background:rgba(38,38,38,.72)"><svg style="left:0;top:0" width="34" height="34" viewBox="-17 -17 34 34"><circle cx="2" cy="-2.500" r="6.500" fill="#d8d8d8"/><path d="M-2.500 2L-9 8.500" stroke="#d8d8d8" stroke-width="2.600"/><path d="M2-6v7M-1.500-2.500h7" stroke="#303030" stroke-width="1.400"/></svg></div>
<svg style="left:1470px;top:100px" width="110" height="110" viewBox="1470 100 110 110" font-family="DejaVu Sans,Liberation Sans,sans-serif" font-size="12.500" text-anchor="middle">
<circle cx="1482" cy="157" r="7.500" fill="#a5283f"/>
<circle cx="1522.500" cy="165" r="7.500" fill="#2f68ad"/>
<circle cx="1522.500" cy="197.500" r="7.500" fill="#8ad108"/>
<path d="M1522.500 157.500V120" stroke="#709b1c" stroke-width="2.200"/>
<path d="M1522.500 157.500L1563 158" stroke="#f0304f" stroke-width="2.200"/>
<circle cx="1522.500" cy="118" r="9.300" fill="#6a9419"/><text x="1522.500" y="122.500" fill="#0a0a0a">Y</text>
<circle cx="1563" cy="158" r="9.300" fill="#f53055"/><text x="1563" y="162.500" fill="#0a0a0a">X</text>
<circle cx="1522.500" cy="149.500" r="9.300" fill="#2b90f5"/><text x="1522.500" y="154" fill="#0a0a0a">Z</text>
</svg>
<div class="abs" style="left:1575px;top:114px;width:11px;height:18px;background:#2e2e2e;border-radius:4px 0 0 4px"><svg style="left:2px;top:3px" width="7" height="12" viewBox="0 0 7 12" fill="none" stroke="#999" stroke-width="1.300"><path d="M6 1L1.500 6 6 11"/></svg></div>
<div class="abs" style="left:79px;top:896px;width:200px;height:30px;background:#202020;border-radius:4px"><svg style="left:10px;top:10px" width="8" height="9" viewBox="0 0 8 9"><path d="M.500.500v8L7.500 4.500z" fill="#a8a8a8"/></svg><div class="t sh" style="left:27px;top:8px;font-size:14.400px;letter-spacing:-.2px;color:#d8d8d8">Move</div></div>
</div>
<!--/VIEWPORT-->
</div>

<!-- OUTLINER -->
<div id="ol" class="abs">
<!--OUTLINER-->
<div class="abs" style="left:-1588px;top:-64px;width:1920px;height:1080px">
<div class="abs" style="left:1588px;top:95px;width:332px;height:271px;overflow:hidden"><div class="abs" style="left:-1588px;top:-95px;width:1920px;height:400px">
<svg style="left:1646px;top:76px" width="45" height="25" viewBox="0 0 45 25"><path d="M7 12.500H22" stroke="#8a8a8a" stroke-width="1"/><path d="M1.500 8.700v7.600L8.500 12.500z" fill="#c8c8c8"/><path d="M23 6.700h13.400l-6.700 12.300z" fill="none" stroke="#d9200f" stroke-width="3.400" stroke-linejoin="round"/></svg>
<div class="ot" style="left:1693px;top:77.5px">midsize_brake_L</div>
<svg style="left:1828px;top:79px;overflow:hidden" width="18" height="19" viewBox="0 0 18 19" preserveAspectRatio="xMinYMin slice" fill="none" stroke="#14c8a0" stroke-width="1.100"><path d="M4.500 3.200h9M3.300 5L8.300 14M14.700 5L9.700 14"/><rect x="1" y="1.200" width="3.800" height="3.800"/><rect x="13.200" y="1.200" width="3.800" height="3.800"/><rect x="7.100" y="13.800" width="3.800" height="3.800"/></svg>
<svg style="left:1890px;top:81.5px" width="17" height="13" viewBox="0 0 17 13"><path d="M1 6.500C4 1.200 13 1.200 16 6.500 13 11.800 4 11.800 1 6.500Z" fill="none" stroke="#e4e4e4" stroke-width="1.800"/><circle cx="8.500" cy="6.200" r="2.900" fill="#e4e4e4"/></svg>
<div class="abs" style="left:1588px;top:101px;width:332px;height:25px;background:#2c2c2c"></div>
<svg style="left:1646px;top:101px" width="45" height="25" viewBox="0 0 45 25"><path d="M7 12.500H22" stroke="#8a8a8a" stroke-width="1"/><path d="M1.500 8.700v7.600L8.500 12.500z" fill="#c8c8c8"/><path d="M23 6.700h13.400l-6.700 12.300z" fill="none" stroke="#d9200f" stroke-width="3.400" stroke-linejoin="round"/></svg>
<div class="ot" style="left:1693px;top:102.5px">midsize_brake_R</div>
<svg style="left:1828px;top:104px;overflow:hidden" width="18" height="19" viewBox="0 0 18 19" preserveAspectRatio="xMinYMin slice" fill="none" stroke="#14c8a0" stroke-width="1.100"><path d="M4.500 3.200h9M3.300 5L8.300 14M14.700 5L9.700 14"/><rect x="1" y="1.200" width="3.800" height="3.800"/><rect x="13.200" y="1.200" width="3.800" height="3.800"/><rect x="7.100" y="13.800" width="3.800" height="3.800"/></svg>
<svg style="left:1890px;top:106.5px" width="17" height="13" viewBox="0 0 17 13"><path d="M1 6.500C4 1.200 13 1.200 16 6.500 13 11.800 4 11.800 1 6.500Z" fill="none" stroke="#e4e4e4" stroke-width="1.800"/><circle cx="8.500" cy="6.200" r="2.900" fill="#e4e4e4"/></svg>
<svg style="left:1646px;top:126px" width="45" height="25" viewBox="0 0 45 25"><path d="M7 12.500H22" stroke="#8a8a8a" stroke-width="1"/><path d="M1.500 8.700v7.600L8.500 12.500z" fill="#c8c8c8"/><path d="M23 6.700h13.400l-6.700 12.300z" fill="none" stroke="#d9200f" stroke-width="3.400" stroke-linejoin="round"/></svg>
<div class="ot" style="left:1693px;top:127.5px">midsize_brakedisc_FL</div>
<svg style="left:1858px;top:129px;overflow:hidden" width="18" height="19" viewBox="0 0 18 19" preserveAspectRatio="xMinYMin slice" fill="none" stroke="#14c8a0" stroke-width="1.100"><path d="M4.500 3.200h9M3.300 5L8.300 14M14.700 5L9.700 14"/><rect x="1" y="1.200" width="3.800" height="3.800"/><rect x="13.200" y="1.200" width="3.800" height="3.800"/><rect x="7.100" y="13.800" width="3.800" height="3.800"/></svg>
<svg style="left:1890px;top:131.5px" width="17" height="13" viewBox="0 0 17 13"><path d="M1 6.500C4 1.200 13 1.200 16 6.500 13 11.800 4 11.800 1 6.500Z" fill="none" stroke="#e4e4e4" stroke-width="1.800"/><circle cx="8.500" cy="6.200" r="2.900" fill="#e4e4e4"/></svg>
<div class="abs" style="left:1588px;top:151px;width:332px;height:25px;background:#2c2c2c"></div>
<svg style="left:1646px;top:151px" width="45" height="25" viewBox="0 0 45 25"><path d="M7 12.500H22" stroke="#8a8a8a" stroke-width="1"/><path d="M1.500 8.700v7.600L8.500 12.500z" fill="#c8c8c8"/><path d="M23 6.700h13.400l-6.700 12.300z" fill="none" stroke="#d9200f" stroke-width="3.400" stroke-linejoin="round"/></svg>
<div class="ot" style="left:1693px;top:152.5px">midsize_brakedisc_FR</div>
<svg style="left:1860px;top:154px;overflow:hidden" width="18" height="19" viewBox="0 0 18 19" preserveAspectRatio="xMinYMin slice" fill="none" stroke="#14c8a0" stroke-width="1.100"><path d="M4.500 3.200h9M3.300 5L8.300 14M14.700 5L9.700 14"/><rect x="1" y="1.200" width="3.800" height="3.800"/><rect x="13.200" y="1.200" width="3.800" height="3.800"/><rect x="7.100" y="13.800" width="3.800" height="3.800"/></svg>
<svg style="left:1890px;top:156.5px" width="17" height="13" viewBox="0 0 17 13"><path d="M1 6.500C4 1.200 13 1.200 16 6.500 13 11.800 4 11.800 1 6.500Z" fill="none" stroke="#e4e4e4" stroke-width="1.800"/><circle cx="8.500" cy="6.200" r="2.900" fill="#e4e4e4"/></svg>
<svg style="left:1646px;top:176px" width="45" height="25" viewBox="0 0 45 25"><path d="M7 12.500H22" stroke="#8a8a8a" stroke-width="1"/><path d="M1.500 8.700v7.600L8.500 12.500z" fill="#c8c8c8"/><path d="M23 6.700h13.400l-6.700 12.300z" fill="none" stroke="#d9200f" stroke-width="3.400" stroke-linejoin="round"/></svg>
<div class="ot" style="left:1693px;top:177.5px">midsize_brakedisc_RL</div>
<svg style="left:1860px;top:179px;overflow:hidden" width="18" height="19" viewBox="0 0 18 19" preserveAspectRatio="xMinYMin slice" fill="none" stroke="#14c8a0" stroke-width="1.100"><path d="M4.500 3.200h9M3.300 5L8.300 14M14.700 5L9.700 14"/><rect x="1" y="1.200" width="3.800" height="3.800"/><rect x="13.200" y="1.200" width="3.800" height="3.800"/><rect x="7.100" y="13.800" width="3.800" height="3.800"/></svg>
<svg style="left:1890px;top:181.5px" width="17" height="13" viewBox="0 0 17 13"><path d="M1 6.500C4 1.200 13 1.200 16 6.500 13 11.800 4 11.800 1 6.500Z" fill="none" stroke="#e4e4e4" stroke-width="1.800"/><circle cx="8.500" cy="6.200" r="2.900" fill="#e4e4e4"/></svg>
<div class="abs" style="left:1588px;top:201px;width:332px;height:25px;background:#2c2c2c"></div>
<svg style="left:1646px;top:201px" width="45" height="25" viewBox="0 0 45 25"><path d="M7 12.500H22" stroke="#8a8a8a" stroke-width="1"/><path d="M1.500 8.700v7.600L8.500 12.500z" fill="#c8c8c8"/><path d="M23 6.700h13.400l-6.700 12.300z" fill="none" stroke="#d9200f" stroke-width="3.400" stroke-linejoin="round"/></svg>
<div class="ot" style="left:1693px;top:202.5px">midsize_brakedisc_RR</div>
<svg style="left:1862px;top:204px;overflow:hidden" width="18" height="19" viewBox="0 0 18 19" preserveAspectRatio="xMinYMin slice" fill="none" stroke="#14c8a0" stroke-width="1.100"><path d="M4.500 3.200h9M3.300 5L8.300 14M14.700 5L9.700 14"/><rect x="1" y="1.200" width="3.800" height="3.800"/><rect x="13.200" y="1.200" width="3.800" height="3.800"/><rect x="7.100" y="13.800" width="3.800" height="3.800"/></svg>
<svg style="left:1890px;top:206.5px" width="17" height="13" viewBox="0 0 17 13"><path d="M1 6.500C4 1.200 13 1.200 16 6.500 13 11.800 4 11.800 1 6.500Z" fill="none" stroke="#e4e4e4" stroke-width="1.800"/><circle cx="8.500" cy="6.200" r="2.900" fill="#e4e4e4"/></svg>
<svg style="left:1646px;top:226px" width="45" height="25" viewBox="0 0 45 25"><path d="M7 12.500H22" stroke="#8a8a8a" stroke-width="1"/><path d="M1.500 8.700v7.600L8.500 12.500z" fill="#c8c8c8"/><path d="M23 6.700h13.400l-6.700 12.300z" fill="none" stroke="#d9200f" stroke-width="3.400" stroke-linejoin="round"/></svg>
<div class="ot" style="left:1693px;top:227.5px">midsize_brakepedal</div>
<svg style="left:1848px;top:229px;overflow:hidden" width="18" height="19" viewBox="0 0 18 19" preserveAspectRatio="xMinYMin slice" fill="none" stroke="#14c8a0" stroke-width="1.100"><path d="M4.500 3.200h9M3.300 5L8.300 14M14.700 5L9.700 14"/><rect x="1" y="1.200" width="3.800" height="3.800"/><rect x="13.200" y="1.200" width="3.800" height="3.800"/><rect x="7.100" y="13.800" width="3.800" height="3.800"/></svg>
<svg style="left:1890px;top:231.5px" width="17" height="13" viewBox="0 0 17 13"><path d="M1 6.500C4 1.200 13 1.200 16 6.500 13 11.800 4 11.800 1 6.500Z" fill="none" stroke="#e4e4e4" stroke-width="1.800"/><circle cx="8.500" cy="6.200" r="2.900" fill="#e4e4e4"/></svg>
<div class="abs" style="left:1588px;top:251px;width:332px;height:25px;background:#2c2c2c"></div>
<svg style="left:1646px;top:251px" width="45" height="25" viewBox="0 0 45 25"><path d="M7 12.500H22" stroke="#8a8a8a" stroke-width="1"/><path d="M1.500 8.700v7.600L8.500 12.500z" fill="#c8c8c8"/><path d="M23 6.700h13.400l-6.700 12.300z" fill="none" stroke="#d9200f" stroke-width="3.400" stroke-linejoin="round"/></svg>
<div class="ot" style="left:1693px;top:252.5px">midsize_bumper_F</div>
<svg style="left:1840px;top:254px;overflow:hidden" width="18" height="19" viewBox="0 0 18 19" preserveAspectRatio="xMinYMin slice" fill="none" stroke="#14c8a0" stroke-width="1.100"><path d="M4.500 3.200h9M3.300 5L8.300 14M14.700 5L9.700 14"/><rect x="1" y="1.200" width="3.800" height="3.800"/><rect x="13.200" y="1.200" width="3.800" height="3.800"/><rect x="7.100" y="13.800" width="3.800" height="3.800"/></svg>
<svg style="left:1890px;top:256.5px" width="17" height="13" viewBox="0 0 17 13"><path d="M1 6.500C4 1.200 13 1.200 16 6.500 13 11.800 4 11.800 1 6.500Z" fill="none" stroke="#e4e4e4" stroke-width="1.800"/><circle cx="8.500" cy="6.200" r="2.900" fill="#e4e4e4"/></svg>
<svg style="left:1646px;top:276px" width="45" height="25" viewBox="0 0 45 25"><path d="M7 12.500H22" stroke="#8a8a8a" stroke-width="1"/><path d="M1.500 8.700v7.600L8.500 12.500z" fill="#c8c8c8"/><path d="M23 6.700h13.400l-6.700 12.300z" fill="none" stroke="#d9200f" stroke-width="3.400" stroke-linejoin="round"/></svg>
<div class="ot" style="left:1693px;top:277.5px">midsize_bumper_R</div>
<svg style="left:1842px;top:279px;overflow:hidden" width="18" height="19" viewBox="0 0 18 19" preserveAspectRatio="xMinYMin slice" fill="none" stroke="#14c8a0" stroke-width="1.100"><path d="M4.500 3.200h9M3.300 5L8.300 14M14.700 5L9.700 14"/><rect x="1" y="1.200" width="3.800" height="3.800"/><rect x="13.200" y="1.200" width="3.800" height="3.800"/><rect x="7.100" y="13.800" width="3.800" height="3.800"/></svg>
<svg style="left:1890px;top:281.5px" width="17" height="13" viewBox="0 0 17 13"><path d="M1 6.500C4 1.200 13 1.200 16 6.500 13 11.800 4 11.800 1 6.500Z" fill="none" stroke="#e4e4e4" stroke-width="1.800"/><circle cx="8.500" cy="6.200" r="2.900" fill="#e4e4e4"/></svg>
<div class="abs" style="left:1588px;top:301px;width:332px;height:25px;background:#2c2c2c"></div>
<svg style="left:1646px;top:301px" width="45" height="25" viewBox="0 0 45 25"><path d="M7 12.500H22" stroke="#8a8a8a" stroke-width="1"/><path d="M1.500 8.700v7.600L8.500 12.500z" fill="#c8c8c8"/><path d="M23 6.700h13.400l-6.700 12.300z" fill="none" stroke="#d9200f" stroke-width="3.400" stroke-linejoin="round"/></svg>
<div class="ot" style="left:1693px;top:302.5px">midsize_bumperbar_F</div>
<svg style="left:1861px;top:304px;overflow:hidden" width="18" height="19" viewBox="0 0 18 19" preserveAspectRatio="xMinYMin slice" fill="none" stroke="#14c8a0" stroke-width="1.100"><path d="M4.500 3.200h9M3.300 5L8.300 14M14.700 5L9.700 14"/><rect x="1" y="1.200" width="3.800" height="3.800"/><rect x="13.200" y="1.200" width="3.800" height="3.800"/><rect x="7.100" y="13.800" width="3.800" height="3.800"/></svg>
<svg style="left:1890px;top:306.5px" width="17" height="13" viewBox="0 0 17 13"><path d="M1 6.500C4 1.200 13 1.200 16 6.500 13 11.800 4 11.800 1 6.500Z" fill="none" stroke="#e4e4e4" stroke-width="1.800"/><circle cx="8.500" cy="6.200" r="2.900" fill="#e4e4e4"/></svg>
<svg style="left:1646px;top:326px" width="45" height="25" viewBox="0 0 45 25"><path d="M7 12.500H22" stroke="#8a8a8a" stroke-width="1"/><path d="M1.500 8.700v7.600L8.500 12.500z" fill="#c8c8c8"/><path d="M23 6.700h13.400l-6.700 12.300z" fill="none" stroke="#d9200f" stroke-width="3.400" stroke-linejoin="round"/></svg>
<div class="ot" style="left:1693px;top:327.5px">midsize_bumpersignal_L</div>
<svg style="left:1877px;top:329px;overflow:hidden" width="9" height="19" viewBox="0 0 18 19" preserveAspectRatio="xMinYMin slice" fill="none" stroke="#14c8a0" stroke-width="1.100"><path d="M4.500 3.200h9M3.300 5L8.300 14M14.700 5L9.700 14"/><rect x="1" y="1.200" width="3.800" height="3.800"/><rect x="13.200" y="1.200" width="3.800" height="3.800"/><rect x="7.100" y="13.800" width="3.800" height="3.800"/></svg>
<svg style="left:1890px;top:331.5px" width="17" height="13" viewBox="0 0 17 13"><path d="M1 6.500C4 1.200 13 1.200 16 6.500 13 11.800 4 11.800 1 6.500Z" fill="none" stroke="#e4e4e4" stroke-width="1.800"/><circle cx="8.500" cy="6.200" r="2.900" fill="#e4e4e4"/></svg>
<div class="abs" style="left:1588px;top:351px;width:332px;height:25px;background:#2c2c2c"></div>
<svg style="left:1646px;top:351px" width="45" height="25" viewBox="0 0 45 25"><path d="M7 12.500H22" stroke="#8a8a8a" stroke-width="1"/><path d="M1.500 8.700v7.600L8.500 12.500z" fill="#c8c8c8"/><path d="M23 6.700h13.400l-6.700 12.300z" fill="none" stroke="#d9200f" stroke-width="3.400" stroke-linejoin="round"/></svg>
<div class="ot" style="left:1693px;top:352.5px">midsize_bumpersignal_R</div>
<svg style="left:1879px;top:354px;overflow:hidden" width="7" height="19" viewBox="0 0 18 19" preserveAspectRatio="xMinYMin slice" fill="none" stroke="#14c8a0" stroke-width="1.100"><path d="M4.500 3.200h9M3.300 5L8.300 14M14.700 5L9.700 14"/><rect x="1" y="1.200" width="3.800" height="3.800"/><rect x="13.200" y="1.200" width="3.800" height="3.800"/><rect x="7.100" y="13.800" width="3.800" height="3.800"/></svg>
<svg style="left:1890px;top:356.5px" width="17" height="13" viewBox="0 0 17 13"><path d="M1 6.500C4 1.200 13 1.200 16 6.500 13 11.800 4 11.800 1 6.500Z" fill="none" stroke="#e4e4e4" stroke-width="1.800"/><circle cx="8.500" cy="6.200" r="2.900" fill="#e4e4e4"/></svg>
<div class="abs" style="left:1649px;top:70px;width:1px;height:300px;background:#8a8a8a"></div>
</div></div>
<div class="abs" style="left:1588px;top:64px;width:332px;height:31px;background:#3b3b3b"></div>
<div class="rb" style="left:1598px;top:67px;width:39px;height:24.500px;"><svg style="left:5px;top:3px" width="19" height="17" viewBox="0 0 19 17"><rect x="0" y="0" width="6.500" height="3.200" rx=".8" fill="#000"/><rect x="9" y="7" width="9" height="3.400" rx=".8" fill="#000"/><rect x="9" y="13" width="9" height="3.400" rx=".8" fill="#000"/><path d="M3 4v11h5M3 8.700h5" stroke="#5a0000" stroke-width="1.200" fill="none"/></svg><svg style="left:26px;top:9px" width="9" height="6" viewBox="0 0 9 6" fill="none" stroke="#f3b0b0" stroke-width="1.400"><path d="M.7.800l3.800 3.700L8.300.800"/></svg></div>
<div class="rb" style="left:1644px;top:67px;width:39px;height:24.500px;"><svg style="left:5px;top:3px" width="18" height="17" viewBox="0 0 18 17"><path d="M1 5v11h11" fill="none" stroke="#6a0000" stroke-width="1.300"/><path d="M3.200 3v11h11" fill="none" stroke="#3a0000" stroke-width="1.300"/><rect x="5.500" y=".5" width="12" height="11.500" rx="1" fill="#000"/><path d="M7 11l3.200-6 2 3.300 1.300-1.500 2.500 4.200z" fill="#d80000"/><circle cx="14.500" cy="3.500" r="1.100" fill="#d80000"/></svg><svg style="left:26px;top:9px" width="9" height="6" viewBox="0 0 9 6" fill="none" stroke="#f3b0b0" stroke-width="1.400"><path d="M.7.800l3.800 3.700L8.300.800"/></svg></div>
<div class="abs" style="left:1704px;top:67px;width:141px;height:24.500px;background:#1f1f1f;border:1px solid #2e2e2e;border-radius:5px"><svg style="left:5px;top:3px" width="17" height="17" viewBox="0 0 17 17" fill="none" stroke="#d8d8d8"><circle cx="10.500" cy="6.500" r="5" stroke-width="1.500"/><path d="M7 10L1 16" stroke-width="1.800"/></svg></div>
<div class="rb" style="left:1865px;top:67px;width:39.5px;height:24.500px;"><svg style="left:6px;top:3px" width="17" height="17" viewBox="0 0 17 17" fill="none" stroke="#000" stroke-width="1.600" stroke-linejoin="round"><path d="M1 1.500h15L10 8.500v7.500L7 13.500V8.500z"/></svg><svg style="left:26px;top:9px" width="9" height="6" viewBox="0 0 9 6" fill="none" stroke="#f3b0b0" stroke-width="1.400"><path d="M.7.800l3.800 3.700L8.300.800"/></svg></div>
<div class="rb" style="left:1911px;top:67px;width:24px;height:24.500px;"><svg style="left:4px;top:6px" width="6" height="13" viewBox="0 0 6 13" fill="none" stroke="#000" stroke-width="1.400"><path d="M6 1H1v12"/></svg></div>
</div>
<!--/OUTLINER-->
</div>

<!-- PROPERTIES -->
<div id="pr" class="abs">
<!--PROPS-->
<div class="abs" style="left:-1588px;top:-368px;width:1920px;height:1080px">
<div class="abs" style="left:1588px;top:399px;width:35px;height:605px;background:#272727"></div>
<div class="abs" style="left:1623px;top:399px;width:297px;height:90px;background:#444"></div>
<div class="abs" style="left:1623px;top:489px;width:297px;height:515px;background:#3b3b3b"></div>
<div class="abs" style="left:1590px;top:410px;width:33px;height:34.400px;background:#303030;border-radius:5px 0 0 5px"><svg style="left:4px;top:5.500px" width="23" height="23" viewBox="0 0 23 23"><g fill="#d0d0d0"><rect x="6.500" y="2" width="1.600" height="9"/><rect x="5.300" y="9.500" width="4" height="3" /><circle cx="7.300" cy="15.500" r="3.200"/><path d="M14.500 2.500v4l1.700 1.200L18 6.500v-4c2 1 2.800 3.500 1.500 5.500-.5.800-1.200 1.200-2 1.500v9c0 1.600-2.500 1.600-2.500 0v-9C12.500 8.500 11.500 4 14.500 2.500z"/></g></svg></div>
<div class="abs" style="left:1590px;top:454px;width:33px;height:34.400px;background:#303030;border-radius:5px 0 0 5px"><svg style="left:4px;top:5.500px" width="23" height="23" viewBox="0 0 23 23"><g fill="none" stroke="#d0d0d0" stroke-width="1.500"><path d="M3.500 6.500h16v11h-16z"/><path d="M7 6V4h5v2"/></g><rect x="5.500" y="8.500" width="9" height="7" fill="#4a4a4a"/><circle cx="17" cy="9.500" r="1" fill="#d0d0d0"/><circle cx="17" cy="13.500" r="1" fill="#d0d0d0"/></svg></div>
<div class="abs" style="left:1590px;top:489px;width:33px;height:34.400px;background:#303030;border-radius:5px 0 0 5px"><svg style="left:4px;top:5.500px" width="23" height="23" viewBox="0 0 23 23"><path d="M4 4h14v5H4z" fill="#d0d0d0"/><path d="M2.500 9h17v4.500h-3v-2h-11v2h-3z" fill="#d0d0d0"/><path d="M6 12h10v8H6z" fill="#9a9a9a"/><path d="M7 19l3.500-4 2 2 1-1 2 3z" fill="#3a3a3a"/></svg></div>
<div class="abs" style="left:1590px;top:524px;width:33px;height:34.400px;background:#303030;border-radius:5px 0 0 5px"><svg style="left:4px;top:5.500px" width="23" height="23" viewBox="0 0 23 23"><path d="M3 7v12h12" fill="none" stroke="#8a8a8a" stroke-width="1.300"/><path d="M5 5v12h12" fill="none" stroke="#aaa" stroke-width="1.300"/><rect x="7" y="2.500" width="13" height="12.500" rx="1" fill="#d0d0d0"/><path d="M8.500 14l3.500-6 2.300 3.500 1.500-1.800 2.700 4.300z" fill="#353535"/><circle cx="17" cy="5.500" r="1.200" fill="#353535"/></svg></div>
<div class="abs" style="left:1590px;top:559px;width:33px;height:34.400px;background:#303030;border-radius:5px 0 0 5px"><svg style="left:4px;top:5.500px" width="23" height="23" viewBox="0 0 23 23"><path d="M7.500 3L3.500 15h8z" fill="#d0d0d0"/><circle cx="15.500" cy="6.500" r="2.500" fill="#d0d0d0"/><circle cx="14.500" cy="15" r="4" fill="none" stroke="#d0d0d0" stroke-width="1.500"/><path d="M12.500 14a2.500 2.500 0 0 1 2-1.500" stroke="#d0d0d0" stroke-width="1" fill="none"/></svg></div>
<div class="abs" style="left:1590px;top:594px;width:33px;height:34.400px;background:#303030;border-radius:5px 0 0 5px"><svg style="left:4px;top:5.500px" width="23" height="23" viewBox="0 0 23 23"><circle cx="11.500" cy="11.500" r="7.500" fill="none" stroke="#d8707a" stroke-width="1.600"/><path d="M7 6c2 1 4 0 5 1.500s-2 2-1.500 4 3 1 3.500 3-1.500 3-1.500 4M16 5.500c-1 1.500.5 2.500 2 3" fill="none" stroke="#d8707a" stroke-width="1.400"/><path d="M4 18c2 2 12 1 16-6" fill="none" stroke="#d8707a" stroke-width="1"/></svg></div>
<div class="abs" style="left:1590px;top:638.4px;width:33px;height:34.400px;background:#303030;border-radius:5px 0 0 5px"><svg style="left:4px;top:5.500px" width="23" height="23" viewBox="0 0 23 23"><rect x="7" y="7" width="9" height="9" fill="#e02a1a"/><path d="M3.500 7V3.500H7M16 3.500h3.500V7M19.500 16v3.500H16M7 19.500H3.500V16" fill="none" stroke="#7a2a22" stroke-width="1.300"/></svg></div>
<div class="abs" style="left:1590px;top:673.4px;width:33px;height:34.400px;background:#303030;border-radius:5px 0 0 5px"><svg style="left:4px;top:5.500px" width="23" height="23" viewBox="0 0 23 23"><path d="M5.500 18.500L13 11" stroke="#5a8fd8" stroke-width="4.200" stroke-linecap="round"/><circle cx="14.500" cy="8.500" r="5.300" fill="#5a8fd8"/><path d="M14 9l3.200-7 5.300 5.300z" fill="#303030"/></svg></div>
<div class="abs" style="left:1590px;top:708.4px;width:33px;height:34.400px;background:#303030;border-radius:5px 0 0 5px"><svg style="left:4px;top:5.500px" width="23" height="23" viewBox="0 0 23 23"><g stroke="#5a8fd8" stroke-width="1.300"><path d="M6 5l11 0M6 5v10M6 5l9 9"/></g><circle cx="6" cy="5" r="2.500" fill="#5a8fd8"/><circle cx="17.500" cy="5" r="1.600" fill="#5a8fd8"/><circle cx="6" cy="16" r="1.600" fill="#5a8fd8"/><circle cx="15.500" cy="14.500" r="1.600" fill="#5a8fd8"/></svg></div>
<div class="abs" style="left:1590px;top:743.4px;width:33px;height:34.400px;background:#303030;border-radius:5px 0 0 5px"><svg style="left:4px;top:5.500px" width="23" height="23" viewBox="0 0 23 23"><circle cx="11" cy="12" r="3" fill="#5a8fd8"/><path d="M15 5.500A8 8 0 1 0 18.500 14" fill="none" stroke="#5a8fd8" stroke-width="1.500"/><circle cx="17.500" cy="6" r="1.700" fill="#5a8fd8"/></svg></div>
<div class="abs" style="left:1590px;top:778.4px;width:33px;height:34.400px;background:#303030;border-radius:5px 0 0 5px"><svg style="left:4px;top:5.500px" width="23" height="23" viewBox="0 0 23 23"><g fill="none" stroke="#5a8fd8" stroke-width="1.500"><circle cx="9" cy="13.500" r="2.300"/><circle cx="9" cy="13.500" r="5.500"/><path d="M13 9.500l5-5.500c2-1 3 1 2.500 2.500L15 15.500"/></g><circle cx="18.500" cy="5.500" r="1" fill="#5a8fd8"/></svg></div>
<div class="abs" style="left:1590px;top:813.4px;width:33px;height:34.400px;background:#303030;border-radius:5px 0 0 5px"><svg style="left:4px;top:5.500px" width="23" height="23" viewBox="0 0 23 23"><g fill="none" stroke="#1cc7a0" stroke-width="1.150"><path d="M5.500 5.500h12M5.500 6L11 17.500M17.500 6L12 17.500"/><rect x="3" y="3" width="4.500" height="4.500"/><rect x="15.500" y="3" width="4.500" height="4.500"/><rect x="9.300" y="15.500" width="4.500" height="4.500"/></g></svg></div>
<div class="abs" style="left:1590px;top:848.4px;width:34px;height:34.400px;background:#424242;border-radius:5px 0 0 5px"><svg style="left:4px;top:5.500px" width="23" height="23" viewBox="0 0 23 23"><circle cx="11.500" cy="11.500" r="8" fill="#e05a64"/><path d="M11.500 11.500V3.500A8 8 0 0 1 19.500 11.500Z" fill="#424242"/><path d="M11.500 11.500H3.500A8 8 0 0 0 11.500 19.500Z" fill="#424242"/><circle cx="11.500" cy="11.500" r="8" fill="none" stroke="#e05a64" stroke-width="1.200"/></svg></div>
<div class="abs" style="left:1590px;top:892.8px;width:33px;height:34.400px;background:#303030;border-radius:5px 0 0 5px"><svg style="left:4px;top:5.500px" width="23" height="23" viewBox="0 0 23 23"><rect x="3.500" y="3.500" width="16" height="16" fill="#d85a68"/><g fill="#3a2026"><rect x="3.500" y="3.500" width="4" height="4"/><rect x="11.500" y="3.500" width="4" height="4"/><rect x="7.500" y="7.500" width="4" height="4"/><rect x="15.500" y="7.500" width="4" height="4"/><rect x="3.500" y="11.500" width="4" height="4"/><rect x="11.500" y="11.500" width="4" height="4"/><rect x="7.500" y="15.500" width="4" height="4"/><rect x="15.500" y="15.500" width="4" height="4"/></g></svg></div>
<div class="abs" style="left:1623.500px;top:399px;width:297px;height:22px;overflow:hidden"><div class="abs" style="left:-1623.500px;top:-399px;width:1920px;height:500px">
<div class="rb" style="left:1634px;top:394px;width:38px;height:24px;border-radius:5px 0 0 5px"><svg style="left:5px;top:3px" width="18" height="18" viewBox="0 0 18 18"><circle cx="9" cy="9" r="8" fill="#000"/><path d="M9 9V1A8 8 0 0 1 17 9Z" fill="#d80000"/><path d="M9 9H1A8 8 0 0 0 9 17Z" fill="#d80000"/><path d="M2 11c3 3 11 3 14 0" stroke="#000" stroke-width="1.200" fill="none"/></svg><svg style="left:25px;top:9px" width="9" height="6" viewBox="0 0 9 6" fill="none" stroke="#f3b0b0" stroke-width="1.400"><path d="M.7.800l3.800 3.700L8.300.800"/></svg></div>
<div class="abs" style="left:1672px;top:394px;width:82px;height:24px;background:#1e1e1e"><div class="t sh" style="left:10px;top:3.500px;font-size:13.200px">midsize_..</div></div>
<div class="abs" style="left:1754px;top:394px;width:30px;height:24px;background:#98000c;color:#f0f0f0;text-align:center;line-height:24px;border:1px solid #3a0a0a;border-top:none">6</div>
<div class="abs" style="left:1784px;top:394px;width:25px;height:24px;background:#262626;border:1px solid #a01010;border-top:none"><svg style="left:4px;top:3px" width="16" height="17" viewBox="0 0 16 17" fill="none" stroke="#8a8a8a" stroke-width="1.400"><path d="M8 1.500c2 1.500 4 2 6.500 2 0 6-2 10-6.500 12C3.500 13.500 1.500 9.500 1.500 3.500c2.500 0 4.500-.5 6.500-2z"/></svg></div>
<div class="abs" style="left:1809px;top:394px;width:25.500px;height:24px;background:#a2000c;border:1px solid #3a0a0a;border-top:none"><svg style="left:2.500px;top:1.500px" width="19" height="19" viewBox="0 0 16 16" fill="none" stroke="#f0d0d0" stroke-width="1.300"><path d="M5.300 11.300V1.700h5.700l3.300 3.300v6.300z"/><path d="M11 1.700V5h3.300" stroke-width="1"/><path d="M5.300 4.800H1.700v9.500h8.500v-3"/></svg></div>
<div class="abs" style="left:1834.500px;top:394px;width:25px;height:24px;background:#a2000c;border:1px solid #3a0a0a;border-top:none;border-radius:0 0 5px 0"><svg style="left:7px;top:6px" width="10" height="10" viewBox="0 0 10 10" stroke="#f0d0d0" stroke-width="1.600"><path d="M.8.800l8.400 8.400M9.200.800L.8 9.200"/></svg></div>
<div class="rb" style="left:1870.500px;top:394px;width:39.500px;height:24px"><svg style="left:6px;top:2px" width="18" height="19" viewBox="0 0 18 19" fill="none" stroke="#000" stroke-width="1.500"><path d="M4.500 5L9 14 13.500 5M5 3h8"/><rect x="1" y="1" width="4" height="4"/><rect x="13" y="1" width="4" height="4"/><rect x="7" y="14" width="4" height="4"/></svg><svg style="left:26px;top:9px" width="9" height="6" viewBox="0 0 9 6" fill="none" stroke="#f3b0b0" stroke-width="1.400"><path d="M.7.800l3.800 3.700L8.300.800"/></svg></div>
</div></div>
<div class="abs" style="left:1588px;top:368px;width:332px;height:31px;background:#3b3b3b;border-radius:6px 0 0 0"></div>
<div class="rb" style="left:1599px;top:371px;width:38.500px;height:24.500px"><svg style="left:4px;top:3px" width="22" height="18" viewBox="0 0 20 16"><rect x=".5" y=".5" width="16" height="6.500" rx="3.200" fill="#000"/><rect x=".5" y="9" width="16" height="6.500" rx="3.200" fill="#000"/><path d="M9 2h4.300a1.800 1.800 0 0 1 0 3.600H9zM11 10.500h2.300a1.800 1.800 0 0 1 0 3.600H11z" fill="#d80000"/></svg><svg style="left:26px;top:9.5px" width="9" height="6" viewBox="0 0 9 6" fill="none" stroke="#f3b0b0" stroke-width="1.400"><path d="M.7.800l3.800 3.700L8.300.800"/></svg></div>
<svg style="left:1654px;top:374px" width="19" height="19" viewBox="0 0 19 19"><rect x="5" y="5" width="9" height="9" fill="#e8e8e8"/><path d="M1 5V1h4M14 1h4v4M18 14v4h-4M5 18H1v-4" fill="none" stroke="#c8c8c8" stroke-width="1.300"/></svg>
<div class="t sh" style="left:1683px;top:376px;font-size:13.200px;letter-spacing:-.32px">midsize_needle_fuel</div>
<svg style="left:1826px;top:379px" width="6" height="9" viewBox="0 0 6 9" fill="none" stroke="#323232" stroke-width="1.200"><path d="M1 1l3.500 3.500L1 8"/></svg>
<svg style="left:1850px;top:375px" width="17" height="17" viewBox="0 0 17 17"><circle cx="8.500" cy="8.500" r="7.800" fill="#e8e8e8"/><path d="M8.500 8.500V.7A7.800 7.800 0 0 1 16.300 8.500Z" fill="#3b3b3b"/><path d="M8.500 8.500H.7A7.800 7.800 0 0 0 8.500 16.300Z" fill="#3b3b3b"/><circle cx="8.500" cy="8.500" r="7.800" fill="none" stroke="#e8e8e8" stroke-width="1.200"/></svg>
<div class="t sh" style="left:1878px;top:376px;font-size:13.200px;letter-spacing:-.32px">midsize_needle</div>
<svg style="left:1634px;top:440px" width="8" height="9" viewBox="0 0 8 9"><path d="M.500.500v8L7.500 4.500z" fill="#a8a8a8"/></svg>
<div class="t sh" style="left:1650px;top:436px;font-size:14.600px;letter-spacing:-.05px">Preview</div><svg style="left:1895px;top:441.5px" width="15" height="6" viewBox="0 0 15 6" fill="#9a9a9a"><rect x="0" y="0" width="1.600" height="1.600"/><rect x="0" y="3.2" width="1.600" height="1.600"/><rect x="3.2" y="0" width="1.600" height="1.600"/><rect x="3.2" y="3.2" width="1.600" height="1.600"/><rect x="6.4" y="0" width="1.600" height="1.600"/><rect x="6.4" y="3.2" width="1.600" height="1.600"/><rect x="9.6" y="0" width="1.600" height="1.600"/><rect x="9.6" y="3.2" width="1.600" height="1.600"/><rect x="12.8" y="0" width="1.600" height="1.600"/><rect x="12.8" y="3.2" width="1.600" height="1.600"/></svg>
<svg style="left:1633.500px;top:470.500px" width="9" height="8" viewBox="0 0 9 8"><path d="M.500.500h8L4.500 7.500z" fill="#a8a8a8"/></svg>
<div class="t sh" style="left:1650px;top:466px;font-size:14.600px;letter-spacing:-.05px">Surface</div><svg style="left:1895px;top:471.5px" width="15" height="6" viewBox="0 0 15 6" fill="#9a9a9a"><rect x="0" y="0" width="1.600" height="1.600"/><rect x="0" y="3.2" width="1.600" height="1.600"/><rect x="3.2" y="0" width="1.600" height="1.600"/><rect x="3.2" y="3.2" width="1.600" height="1.600"/><rect x="6.4" y="0" width="1.600" height="1.600"/><rect x="6.4" y="3.2" width="1.600" height="1.600"/><rect x="9.6" y="0" width="1.600" height="1.600"/><rect x="9.6" y="3.2" width="1.600" height="1.600"/><rect x="12.8" y="0" width="1.600" height="1.600"/><rect x="12.8" y="3.2" width="1.600" height="1.600"/></svg>
<div class="abs" style="left:1633.500px;top:499.500px;width:276.500px;height:24.500px;background:#ec7b6c;border:1px solid #c01818;border-radius:5px;color:#000;text-align:center;line-height:22px;font-size:13.200px;padding-left:18px">Use Nodes<svg style="left:5px;top:3px" width="19" height="17" viewBox="0 0 19 17"><rect x="3" y=".5" width="10.500" height="6.500" rx="1.800" fill="#000"/><rect x="0" y="10" width="10.500" height="6.500" rx="1.800" fill="#000"/><path d="M4.500 5h7.500M1.500 14.500h7.500" stroke="#f5b5a8" stroke-width="1"/><path d="M14 3c3 .5 3.500 2 3.500 5s-.5 5.500-5.500 6" fill="none" stroke="#000" stroke-width="1.100"/></svg></div>
<div class="t sh" style="right:164.500px;top:547.6px;font-size:13.200px;letter-spacing:-.25px">Surface</div>
<div class="rb" style="left:1777px;top:543.6px;width:133px;height:24px"><div class="t" style="left:9px;top:3px;font-size:13.200px;letter-spacing:-.3px;color:#1a0000">Principled BSD</div><div class="abs" style="left:116px;top:7.500px;width:8px;height:8px;border:2.200px solid #2c0000;border-radius:50%"></div></div>
<div class="rb" style="left:1777px;top:587.5px;width:133px;height:24px"><div class="t" style="left:9px;top:3px;font-size:13.200px;letter-spacing:-.3px;color:#1a0000">GGX</div><svg style="left:119px;top:9.5px" width="9" height="6" viewBox="0 0 9 6" fill="none" stroke="#f3b0b0" stroke-width="1.400"><path d="M.7.800l3.800 3.700L8.300.800"/></svg></div>
<div class="rb" style="left:1777px;top:615px;width:133px;height:24px"><div class="t" style="left:9px;top:3px;font-size:13.200px;letter-spacing:-.3px;color:#1a0000">Christensen-Bu..</div><svg style="left:119px;top:9.5px" width="9" height="6" viewBox="0 0 9 6" fill="none" stroke="#f3b0b0" stroke-width="1.400"><path d="M.7.800l3.800 3.700L8.300.800"/></svg></div>
<div class="t sh" style="right:164.500px;top:650.3px;font-size:13.200px;letter-spacing:-.25px">Base Color</div>
<div class="abs" style="left:1777px;top:646.3px;width:107px;height:23.500px;background:#e7e7e7;border:1px solid #c01010;border-right:none;border-radius:5px 0 0 5px"></div>
<div class="abs" style="left:1884px;top:646.3px;width:26px;height:23.500px;background:#d80000;border:1px solid #1d0a0a;border-radius:0 5px 5px 0"><div class="abs" style="left:8.0px;top:7px;width:8px;height:8px;border:2.200px solid #2c0000;border-radius:50%"></div></div>
<div class="t sh" style="right:164.500px;top:681.4px;font-size:13.200px;letter-spacing:-.25px">Subsurface</div>
<div class="abs sh" style="left:1777px;top:677.4px;width:107px;height:23.500px;background:#595959;border-radius:5px 0 0 5px;overflow:hidden;text-align:center;line-height:23px;font-size:13.200px"><span style="position:relative;left:-2px">0.000</span></div>
<div class="abs" style="left:1884px;top:677.4px;width:26px;height:23.500px;background:#d80000;border:1px solid #1d0a0a;border-radius:0 5px 5px 0"><div class="abs" style="left:8.0px;top:7px;width:8px;height:8px;border:2.200px solid #2c0000;border-radius:50%"></div></div>
<div class="t sh" style="right:164.500px;top:711.7px;font-size:13.200px;letter-spacing:-.25px">Subsurface Radi..</div>
<div class="abs sh" style="left:1777px;top:707.700px;width:97px;height:73.700px;background:#595959;border-radius:5px;overflow:hidden;text-align:center;font-size:13.200px;line-height:24.500px;padding-right:3px"><div>1.000</div><div style="border-top:1px solid #3f3f3f;border-bottom:1px solid #3f3f3f;line-height:23px;height:24.500px">0.200</div><div>0.100</div></div>
<div class="abs" style="left:1885.5px;top:707.7px;width:24.5px;height:23.500px;background:#d80000;border:1px solid #1d0a0a;border-radius:5px"><div class="abs" style="left:7.25px;top:7px;width:8px;height:8px;border:2.200px solid #2c0000;border-radius:50%"></div></div>
<div class="t sh" style="right:164.500px;top:792.6px;font-size:13.200px;letter-spacing:-.25px">Subsurface Color</div>
<div class="abs" style="left:1777px;top:788.6px;width:107px;height:23.500px;background:#e7e7e7;border:1px solid #c01010;border-right:none;border-radius:5px 0 0 5px"></div>
<div class="abs" style="left:1884px;top:788.6px;width:26px;height:23.500px;background:#d80000;border:1px solid #1d0a0a;border-radius:0 5px 5px 0"><div class="abs" style="left:8.0px;top:7px;width:8px;height:8px;border:2.200px solid #2c0000;border-radius:50%"></div></div>
<div class="t sh" style="right:164.500px;top:823.6px;font-size:13.200px;letter-spacing:-.25px">Metallic</div>
<div class="abs sh" style="left:1777px;top:819.6px;width:107px;height:23.500px;background:#595959;border-radius:5px 0 0 5px;overflow:hidden;text-align:center;line-height:23px;font-size:13.200px"><span style="position:relative;left:-2px">0.000</span></div>
<div class="abs" style="left:1884px;top:819.6px;width:26px;height:23.500px;background:#d80000;border:1px solid #1d0a0a;border-radius:0 5px 5px 0"><div class="abs" style="left:8.0px;top:7px;width:8px;height:8px;border:2.200px solid #2c0000;border-radius:50%"></div></div>
<div class="t sh" style="right:164.500px;top:854.6px;font-size:13.200px;letter-spacing:-.25px">Specular</div>
<div class="abs sh" style="left:1777px;top:850.6px;width:107px;height:23.500px;background:#595959;border-radius:5px 0 0 5px;overflow:hidden;text-align:center;line-height:23px;font-size:13.200px"><div class="abs" style="left:0;top:0;width:53px;height:24px;background:#5680c2"></div><span style="position:relative;left:-2px">0.500</span></div>
<div class="abs" style="left:1884px;top:850.6px;width:26px;height:23.500px;background:#d80000;border:1px solid #1d0a0a;border-radius:0 5px 5px 0"><div class="abs" style="left:8.0px;top:7px;width:8px;height:8px;border:2.200px solid #2c0000;border-radius:50%"></div></div>
<div class="t sh" style="right:164.500px;top:885.6px;font-size:13.200px;letter-spacing:-.25px">Specular Tint</div>
<div class="abs sh" style="left:1777px;top:881.6px;width:107px;height:23.500px;background:#595959;border-radius:5px 0 0 5px;overflow:hidden;text-align:center;line-height:23px;font-size:13.200px"><span style="position:relative;left:-2px">0.000</span></div>
<div class="abs" style="left:1884px;top:881.6px;width:26px;height:23.500px;background:#d80000;border:1px solid #1d0a0a;border-radius:0 5px 5px 0"><div class="abs" style="left:8.0px;top:7px;width:8px;height:8px;border:2.200px solid #2c0000;border-radius:50%"></div></div>
<div class="t sh" style="right:164.500px;top:916.6px;font-size:13.200px;letter-spacing:-.25px">Roughness</div>
<div class="abs sh" style="left:1777px;top:912.6px;width:107px;height:23.500px;background:#595959;border-radius:5px 0 0 5px;overflow:hidden;text-align:center;line-height:23px;font-size:13.200px"><div class="abs" style="left:0;top:0;width:53px;height:24px;background:#5680c2"></div><span style="position:relative;left:-2px">0.500</span></div>
<div class="abs" style="left:1884px;top:912.6px;width:26px;height:23.500px;background:#d80000;border:1px solid #1d0a0a;border-radius:0 5px 5px 0"><div class="abs" style="left:8.0px;top:7px;width:8px;height:8px;border:2.200px solid #2c0000;border-radius:50%"></div></div>
<div class="t sh" style="right:164.500px;top:947.6px;font-size:13.200px;letter-spacing:-.25px">Anisotropic</div>
<div class="abs sh" style="left:1777px;top:943.6px;width:107px;height:23.500px;background:#595959;border-radius:5px 0 0 5px;overflow:hidden;text-align:center;line-height:23px;font-size:13.200px"><span style="position:relative;left:-2px">0.000</span></div>
<div class="abs" style="left:1884px;top:943.6px;width:26px;height:23.500px;background:#d80000;border:1px solid #1d0a0a;border-radius:0 5px 5px 0"><div class="abs" style="left:8.0px;top:7px;width:8px;height:8px;border:2.200px solid #2c0000;border-radius:50%"></div></div>
<div class="t sh" style="right:164.500px;top:978.6px;font-size:13.200px;letter-spacing:-.25px">Anisotropic Rot..</div>
<div class="abs sh" style="left:1777px;top:974.6px;width:107px;height:23.500px;background:#595959;border-radius:5px 0 0 5px;overflow:hidden;text-align:center;line-height:23px;font-size:13.200px"><span style="position:relative;left:-2px">0.000</span></div>
<div class="abs" style="left:1884px;top:974.6px;width:26px;height:23.500px;background:#d80000;border:1px solid #1d0a0a;border-radius:0 5px 5px 0"><div class="abs" style="left:8.0px;top:7px;width:8px;height:8px;border:2.200px solid #2c0000;border-radius:50%"></div></div>
</div>
<!--/PROPS-->
</div>

<!-- TIMELINE -->
<div id="tl" class="abs">
<!--TIMELINE-->
<div class="abs" style="left:-1px;top:-934px;width:1920px;height:1080px">
<div class="abs" style="left:1px;top:932px;width:1585px;height:33px;background:#3d3d3d"></div>
<div class="rb" style="left:10px;top:938px;width:40px;height:24.500px;"><svg style="left:5px;top:3px" width="18" height="18" viewBox="0 0 18 18"><circle cx="9" cy="9" r="8.300" fill="#000"/><path d="M9 9L14.500 3.500A7.800 7.800 0 0 1 14.500 14.500Z" fill="#d80000"/><path d="M9 4v5.500l3 2" stroke="#d80000" stroke-width="0" fill="none"/></svg><svg style="left:27px;top:9px" width="9" height="6" viewBox="0 0 9 6" fill="none" stroke="#f3b0b0" stroke-width="1.400"><path d="M.7.800l3.800 3.700L8.300.800"/></svg></div>
<div class="rb" style="left:56.5px;top:938px;width:87.0px;height:24.500px;border-radius:5px 0 0 5px"><div class="t" style="left:9px;top:4px;font-size:13.400px;letter-spacing:-.3px;color:#1a0000">Playback</div><svg style="left:73px;top:9px" width="9" height="6" viewBox="0 0 9 6" fill="none" stroke="#f3b0b0" stroke-width="1.400"><path d="M.7.800l3.800 3.700L8.300.800"/></svg></div>
<div class="rb" style="left:143px;top:938px;width:76px;height:24.500px;border-radius:0 5px 5px 0"><div class="t" style="left:9px;top:4px;font-size:13.400px;letter-spacing:-.3px;color:#1a0000">Keying</div><svg style="left:62px;top:9px" width="9" height="6" viewBox="0 0 9 6" fill="none" stroke="#f3b0b0" stroke-width="1.400"><path d="M.7.800l3.800 3.700L8.300.800"/></svg></div>
<div class="t sh" style="left:228px;top:943px;font-size:13.200px">View</div>
<div class="t sh" style="left:278px;top:943px;font-size:13.200px">Marker</div>
<div class="abs" style="left:689px;top:938px;width:25.500px;height:24.500px;background:#1f1f1f;border:1px solid #a01010;border-radius:5px"><div class="abs" style="left:6.500px;top:6.500px;width:10px;height:10px;border-radius:50%;background:#e0e0e0"></div></div>
<div class="abs" style="left:720px;top:938px;width:150px;height:24.500px;background:#a7000f;border:1px solid #2a0a0a;border-radius:5px;overflow:hidden">
<svg style="left:-1px;top:-1px" width="25" height="24" viewBox="0 0 25 23"><path d="M6.500 6v11" stroke="#fff" stroke-width="2"/><path d="M17.500 6v11L9 11.500z" fill="#fff"/></svg>
<svg style="left:24px;top:-1px" width="25" height="24" viewBox="0 0 25 23"><path d="M8.500 6.500l5 5-5 5-5-5z" fill="#fff"/><path d="M21 6.500v10L14 11.500z" fill="#fff"/></svg>
<div class="abs" style="left:24px;top:0;width:1px;height:24px;background:#3a0a0a"></div>
<svg style="left:49px;top:-1px" width="25" height="24" viewBox="0 0 25 23"><path d="M17.500 5v13L6 11.500z" fill="#fff"/></svg>
<div class="abs" style="left:49px;top:0;width:1px;height:24px;background:#3a0a0a"></div>
<svg style="left:74px;top:-1px" width="25" height="24" viewBox="0 0 25 23"><path d="M7 5v13L18.500 11.500z" fill="#fff"/></svg>
<div class="abs" style="left:74px;top:0;width:1px;height:24px;background:#3a0a0a"></div>
<svg style="left:99px;top:-1px" width="25" height="24" viewBox="0 0 25 23"><path d="M16 6.500l5 5-5 5-5-5z" fill="#fff"/><path d="M3.500 6.500v10L10.500 11.500z" fill="#fff"/></svg>
<div class="abs" style="left:99px;top:0;width:1px;height:24px;background:#3a0a0a"></div>
<svg style="left:124px;top:-1px" width="25" height="24" viewBox="0 0 25 23"><path d="M18 6v11" stroke="#fff" stroke-width="2"/><path d="M7 6v11L15.500 11.500z" fill="#fff"/></svg>
<div class="abs" style="left:124px;top:0;width:1px;height:24px;background:#3a0a0a"></div>
</div>
<div class="abs sh" style="left:1222px;top:938.800px;width:91px;height:23.500px;background:#555;border-radius:5px;text-align:center;line-height:24px;font-size:13.200px;color:#e8e8e8">1</div>
<div class="abs" style="left:1320px;top:938px;width:25px;height:24.500px;background:#1f1f1f;border:1px solid #a01010;border-right:none;border-radius:5px 0 0 5px"><svg style="left:3px;top:2px" width="18" height="19" viewBox="0 0 18 19" fill="none" stroke="#d8d8d8" stroke-width="1.500"><circle cx="9" cy="11" r="6.500"/><path d="M9 7v4.500h3.500M6.500 2h5M9 2v2.500M14.500 4.500l1.500 1.500" stroke-width="1.400"/></svg></div>
<div class="abs sh" style="left:1344.500px;top:938.800px;width:112px;height:23.500px;background:#555;font-size:13.200px;line-height:24px;border-right:1px solid #3d3d3d"><span style="position:absolute;left:20px">Start:</span><span style="position:absolute;right:17px">1</span></div>
<div class="abs sh" style="left:1456.500px;top:938.800px;width:106px;height:23.500px;background:#555;font-size:13.200px;line-height:24px;border-radius:0 5px 5px 0"><span style="position:absolute;left:19px">End:</span><span style="position:absolute;right:18px">250</span></div>
<div class="abs" style="left:1px;top:965px;width:1585px;height:25px;background:#2b2b2b"></div>
<div class="abs" style="left:43px;top:967.800px;width:31.500px;height:21.500px;background:#5680c2;border-radius:5px"></div>
<div class="t sh" style="left:58.0px;top:972.500px;font-size:13.200px;letter-spacing:-.5px;color:#fff;transform:translateX(-50%)">1</div>
<div class="t sh" style="left:111.0px;top:972.500px;font-size:13.200px;letter-spacing:-.5px;color:#c4c4c4;transform:translateX(-50%)">10</div>
<div class="t sh" style="left:169.9px;top:972.500px;font-size:13.200px;letter-spacing:-.5px;color:#c4c4c4;transform:translateX(-50%)">20</div>
<div class="t sh" style="left:228.9px;top:972.500px;font-size:13.200px;letter-spacing:-.5px;color:#c4c4c4;transform:translateX(-50%)">30</div>
<div class="t sh" style="left:287.8px;top:972.500px;font-size:13.200px;letter-spacing:-.5px;color:#c4c4c4;transform:translateX(-50%)">40</div>
<div class="t sh" style="left:346.7px;top:972.500px;font-size:13.200px;letter-spacing:-.5px;color:#c4c4c4;transform:translateX(-50%)">50</div>
<div class="t sh" style="left:405.6px;top:972.500px;font-size:13.200px;letter-spacing:-.5px;color:#c4c4c4;transform:translateX(-50%)">60</div>
<div class="t sh" style="left:464.5px;top:972.500px;font-size:13.200px;letter-spacing:-.5px;color:#c4c4c4;transform:translateX(-50%)">70</div>
<div class="t sh" style="left:523.5px;top:972.500px;font-size:13.200px;letter-spacing:-.5px;color:#c4c4c4;transform:translateX(-50%)">80</div>
<div class="t sh" style="left:582.4px;top:972.500px;font-size:13.200px;letter-spacing:-.5px;color:#c4c4c4;transform:translateX(-50%)">90</div>
<div class="t sh" style="left:641.3px;top:972.500px;font-size:13.200px;letter-spacing:-.5px;color:#c4c4c4;transform:translateX(-50%)">100</div>
<div class="t sh" style="left:700.2px;top:972.500px;font-size:13.200px;letter-spacing:-.5px;color:#c4c4c4;transform:translateX(-50%)">110</div>
<div class="t sh" style="left:759.1px;top:972.500px;font-size:13.200px;letter-spacing:-.5px;color:#c4c4c4;transform:translateX(-50%)">120</div>
<div class="t sh" style="left:818.1px;top:972.500px;font-size:13.200px;letter-spacing:-.5px;color:#c4c4c4;transform:translateX(-50%)">130</div>
<div class="t sh" style="left:877.0px;top:972.500px;font-size:13.200px;letter-spacing:-.5px;color:#c4c4c4;transform:translateX(-50%)">140</div>
<div class="t sh" style="left:935.9px;top:972.500px;font-size:13.200px;letter-spacing:-.5px;color:#c4c4c4;transform:translateX(-50%)">150</div>
<div class="t sh" style="left:994.8px;top:972.500px;font-size:13.200px;letter-spacing:-.5px;color:#c4c4c4;transform:translateX(-50%)">160</div>
<div class="t sh" style="left:1053.7px;top:972.500px;font-size:13.200px;letter-spacing:-.5px;color:#c4c4c4;transform:translateX(-50%)">170</div>
<div class="t sh" style="left:1112.7px;top:972.500px;font-size:13.200px;letter-spacing:-.5px;color:#c4c4c4;transform:translateX(-50%)">180</div>
<div class="t sh" style="left:1171.6px;top:972.500px;font-size:13.200px;letter-spacing:-.5px;color:#c4c4c4;transform:translateX(-50%)">190</div>
<div class="t sh" style="left:1230.5px;top:972.500px;font-size:13.200px;letter-spacing:-.5px;color:#c4c4c4;transform:translateX(-50%)">200</div>
<div class="t sh" style="left:1289.4px;top:972.500px;font-size:13.200px;letter-spacing:-.5px;color:#c4c4c4;transform:translateX(-50%)">210</div>
<div class="t sh" style="left:1348.3px;top:972.500px;font-size:13.200px;letter-spacing:-.5px;color:#c4c4c4;transform:translateX(-50%)">220</div>
<div class="t sh" style="left:1407.3px;top:972.500px;font-size:13.200px;letter-spacing:-.5px;color:#c4c4c4;transform:translateX(-50%)">230</div>
<div class="t sh" style="left:1466.2px;top:972.500px;font-size:13.200px;letter-spacing:-.5px;color:#c4c4c4;transform:translateX(-50%)">240</div>
<div class="t sh" style="left:1525.1px;top:972.500px;font-size:13.200px;letter-spacing:-.5px;color:#c4c4c4;transform:translateX(-50%)">250</div>
<div class="abs" style="left:1px;top:990px;width:1585px;height:14px;background:#2b2b2b"></div>
<div class="abs" style="left:10px;top:989.500px;width:1564.500px;height:11.500px;background:#696969;border-radius:6px"></div>
<div class="abs" style="left:12px;top:991px;width:8.500px;height:8.500px;background:#4a4a4a;border-radius:50%"></div>
<div class="abs" style="left:1564px;top:991px;width:8.500px;height:8.500px;background:#4a4a4a;border-radius:50%"></div>
<div class="abs" style="left:0;top:984px;width:10px;height:19px;background:#262626;border-radius:0 5px 5px 0"></div><svg style="left:2px;top:987px" width="7" height="12" viewBox="0 0 7 12" fill="none" stroke="#aaa" stroke-width="1.200"><path d="M1 1l4.500 5L1 11"/></svg>
<div class="abs" style="left:1575px;top:984px;width:11px;height:17px;background:#262626;border-radius:5px 0 0 5px"></div>
<svg style="left:1577.500px;top:987px" width="7" height="12" viewBox="0 0 7 12" fill="none" stroke="#aaa" stroke-width="1.200"><path d="M6 1L1.500 6 6 11"/></svg>
<svg style="left:2px;top:1001.500px" width="1584" height="3" viewBox="0 0 1584 3"><rect x="109.0" y="0" width="1" height="2" fill="#555"/><rect x="167.9" y="0" width="1" height="2" fill="#555"/><rect x="226.9" y="0" width="1" height="2" fill="#555"/><rect x="285.8" y="0" width="1" height="2" fill="#555"/><rect x="344.7" y="0" width="1" height="2" fill="#555"/><rect x="403.6" y="0" width="1" height="2" fill="#555"/><rect x="462.5" y="0" width="1" height="2" fill="#555"/><rect x="521.5" y="0" width="1" height="2" fill="#555"/><rect x="580.4" y="0" width="1" height="2" fill="#555"/><rect x="639.3" y="0" width="1" height="2" fill="#555"/><rect x="698.2" y="0" width="1" height="2" fill="#555"/><rect x="757.1" y="0" width="1" height="2" fill="#555"/><rect x="816.1" y="0" width="1" height="2" fill="#555"/><rect x="875.0" y="0" width="1" height="2" fill="#555"/><rect x="933.9" y="0" width="1" height="2" fill="#555"/><rect x="992.8" y="0" width="1" height="2" fill="#555"/><rect x="1051.7" y="0" width="1" height="2" fill="#555"/><rect x="1110.7" y="0" width="1" height="2" fill="#555"/><rect x="1169.6" y="0" width="1" height="2" fill="#555"/><rect x="1228.5" y="0" width="1" height="2" fill="#555"/><rect x="1287.4" y="0" width="1" height="2" fill="#555"/><rect x="1346.3" y="0" width="1" height="2" fill="#555"/><rect x="1405.3" y="0" width="1" height="2" fill="#555"/><rect x="1464.2" y="0" width="1" height="2" fill="#555"/><rect x="1523.1" y="0" width="1" height="2" fill="#555"/><rect x="55.500" y="0" width="1.500" height="2.500" fill="#5680c2"/></svg>
</div>
<!--/TIMELINE-->
</div>

<!-- STATUS BAR -->
<div id="st" class="abs">
<!--STATUS-->
<svg style="left:14px;top:5px" width="15" height="20" viewBox="0 0 13 19" preserveAspectRatio="none"><rect x="1" y="1" width="11" height="17" rx="3.500" fill="none" stroke="#c8c8c8" stroke-width="1.400"/><path d="M1.500 8V4.500a3 3 0 0 1 3-3h2V8z" fill="#c8c8c8"/></svg>
<svg style="left:326px;top:5px" width="15" height="20" viewBox="0 0 13 19" preserveAspectRatio="none"><rect x="1" y="1" width="11" height="17" rx="3.500" fill="none" stroke="#c8c8c8" stroke-width="1.400"/><rect x="5" y="2.500" width="3" height="6" rx="1" fill="#c8c8c8"/></svg>
<svg style="left:637px;top:5px" width="15" height="20" viewBox="0 0 13 19" preserveAspectRatio="none"><rect x="1" y="1" width="11" height="17" rx="3.500" fill="none" stroke="#c8c8c8" stroke-width="1.400"/><path d="M11.500 8V4.500a3 3 0 0 0-3-3h-2V8z" fill="#c8c8c8"/></svg>
<div class="t sh" style="right:37px;top:6px;font-size:13.200px;letter-spacing:-.285px;color:#d0d0d0">Collection | midsize_needle_fuel | Verts:85,792 | Faces:117,353 | Tris:117,403 | Objects:124/235 | Mem: 137.9 MB | v2.80.75</div>
<!--/STATUS-->
</div>

<!-- TASKBAR -->
<div id="tb" class="abs">
<!--TASKBAR-->
<div class="abs" style="left:0;top:-1030px;width:1920px;height:1080px">
<div class="abs" style="left:618px;top:1030px;width:61px;height:50px;background:#383838"></div>
<div class="abs" style="left:561px;top:1077px;width:51px;height:3px;background:#f9a3b0"></div>
<div class="abs" style="left:618px;top:1077px;width:61px;height:3px;background:#f9a3b0"></div>
<div class="abs" style="left:685px;top:1077px;width:41px;height:3px;background:#f9a3b0"></div>
<div class="abs" style="left:726px;top:1077px;width:10px;height:3px;background:#b8727e"></div>
<svg style="left:19.800px;top:1044.500px" width="21" height="21" viewBox="0 0 21 21" fill="#fff"><path d="M0 3l8.500-1.200v8.200H0zM9.500 1.700L21 0v10H9.500zM0 11h8.500v8.200L0 18zM9.500 11H21v10L9.500 19.300z"/></svg>
<svg style="left:79px;top:1043px" width="24" height="24" viewBox="0 0 24 24" fill="none" stroke="#fff" stroke-width="1.500"><circle cx="14" cy="9" r="7"/><path d="M9.200 14L1.500 21.500"/></svg>
<svg style="left:139px;top:1044px" width="22" height="21" viewBox="0 0 22 21" fill="none" stroke="#fff" stroke-width="1.500"><rect x="2" y="6" width="10" height="9"/><path d="M1.500 3.500V1.500h11v2M1.500 17.500v2h11v-2M18.500 1v5M18.500 10v10"/><rect x="17" y="6.500" width="3" height="3" fill="#fff" stroke="none"/></svg>
<svg style="left:200px;top:1042.500px" width="28" height="24" viewBox="0 0 28 24"><path d="M0 1.500C0 .7.700 0 1.500 0h9.500l2.500 3H26.500c.8 0 1.500.7 1.500 1.500V23H0z" fill="#f3c84e"/><path d="M0 5h28v18H0z" fill="#fbe08a"/><path d="M2 1.500h7v1.500H2z" fill="#fff"/><path d="M5 13h18v10H19v-6H9v6H5z" fill="#3b9be0"/><path d="M9 17h10v6H9z" fill="#fbe08a"/></svg>
<svg style="left:263px;top:1042px" width="26" height="27" viewBox="0 0 26 27"><path d="M1 12.500C2 5 7.500.500 14 .500c7 0 11.500 5 11.500 12v3H9c.3 4 3.500 6 7.500 6 3 0 5.500-.8 7.800-2.200v5.500c-2.500 1.400-5.600 2-9 2C7.500 26.800 3 22 3 15.500c0-4 2-7.200 5.200-9-2.800 1-5.500 3-7.200 6z" fill="#0a78d7"/><path d="M9.200 10.500h9.500c0-3-1.700-5-4.500-5-2.700 0-4.600 2-5 5z" fill="#0b0b0b"/></svg>
<svg style="left:322.500px;top:1040px" width="30" height="30" viewBox="0 0 30 30"><path d="M9.500 9V6.500a5.500 5.500 0 0 1 11 0V9" fill="none" stroke="#e8e8e8" stroke-width="1.600"/><path d="M12 9V7a3.500 3.500 0 0 1 7 0v2" fill="none" stroke="#b8b8b8" stroke-width="1.200"/><path d="M.5 8.500h29V28c0 .8-.5 1.200-1.200 1.200H1.700C1 29.200.5 28.800.5 28z" fill="#fff"/><rect x="9" y="13" width="5.500" height="5.500" fill="#f25022"/><rect x="15.500" y="13" width="5.500" height="5.500" fill="#7fba00"/><rect x="9" y="19.500" width="5.500" height="5.500" fill="#00a4ef"/><rect x="15.500" y="19.500" width="5.500" height="5.500" fill="#ffb900"/></svg>
<svg style="left:385.500px;top:1040.500px" width="30" height="29" viewBox="0 0 30 29" fill="#fff"><path d="M7.500 0L15 4.800 7.500 9.600 0 4.800zM22.500 0L30 4.800 22.500 9.600 15 4.800zM0 14.400L7.500 9.600 15 14.400 7.500 19.200zM22.500 9.600L30 14.400 22.500 19.200 15 14.400zM7.500 21L15 16.200 22.500 21 15 25.800z"/></svg>
<svg style="left:446px;top:1042px" width="32" height="25" viewBox="0 0 32 25"><defs><linearGradient id="ard" x1="0" x2="1"><stop offset="0" stop-color="#2aa0b8"/><stop offset="1" stop-color="#8fdc6a"/></linearGradient></defs><path d="M16 12.500C13 7.500 10.500 5.500 7.500 5.500a6.500 6.500 0 0 0 0 13c3 0 5.500-2 8.500-6zm0 0c2.500-3.500 4.500-5 7-5a5 5 0 0 1 0 10c-2.500 0-4.500-1.500-7-5z" fill="none" stroke="url(#ard)" stroke-width="2.800"/></svg>
<svg style="left:508.500px;top:1042px" width="31" height="24" viewBox="0 0 31 24"><path d="M0 7.500L15.500 0 31 7.500V24H0z" fill="#fff"/><path d="M1.500 9L30 8.500 18 15.500l5 5.500z" fill="#0b0b0b"/></svg>
<svg style="left:571px;top:1040.500px" width="29" height="29" viewBox="-14.500 -14.500 29 29"><circle r="14" fill="#db4437"/><path d="M-12.100 -7L-3 8.700 2.500 13.800A14 14 0 0 1 -12.100 -7Z" fill="#0f9d58"/><path d="M-12.100 -7L-5.600 3.200 0 0V6.500L-3 8.700-5 12.900A14 14 0 0 1 -12.100 -7Z" fill="#0f9d58"/><path d="M14 0A14 14 0 0 1 -1.500 13.900L5.500 3.200 5.600-3.200 13.400-4Z" fill="#ffcd40"/><path d="M0 -6.500H13.400A14 14 0 0 1 14 0L5.600 3.200Z" fill="#ffcd40"/><circle r="6.500" fill="#f1f1f1"/><circle r="5.200" fill="#4285f4"/></svg>
<svg style="left:633px;top:1043.500px" width="30" height="24" viewBox="0 0 30 24"><path d="M1 17.500L13 8H6.500C5 8 5 5.500 6.500 5.500H15.500L12.500 3C11.300 2 12.800.3 14 1.300L26 11c3.500 3.200 3.500 7.500.5 10.300-3.800 3.400-10.500 3.400-14.300 0-1.300-1.200-2-2.500-2.300-3.800L4 21.500c-2 1.500-5-2-3-4z" fill="#ea7600"/><ellipse cx="19.300" cy="14.500" rx="6.300" ry="5.300" fill="#fff"/><circle cx="19.300" cy="14.500" r="3" fill="#265787"/></svg>
<svg style="left:698px;top:1043px" width="30" height="30" viewBox="0 0 30 30"><rect x="0" y="0" width="24" height="22" rx="3" fill="#7289da"/><path d="M6 7.500c2-1.200 4-1.500 6-1.500s4 .3 6 1.500c1.500 2.500 2.200 5 2.200 8-1.500 1.200-3 1.800-4.500 2l-1-1.700c-1.800.4-3.600.4-5.400 0l-1 1.700c-1.500-.2-3-.8-4.500-2 0-3 .7-5.500 2.200-8z" fill="#fff"/><ellipse cx="9.300" cy="12.500" rx="1.600" ry="1.900" fill="#7289da"/><ellipse cx="14.700" cy="12.500" rx="1.600" ry="1.900" fill="#7289da"/><circle cx="19" cy="19" r="8.700" fill="#ec4250"/><circle cx="19" cy="19" r="3.600" fill="#fff"/></svg>
<svg style="left:1578px;top:1045px" width="20" height="20" viewBox="0 0 20 20" fill="none" stroke="#fff" stroke-width="1.400"><circle cx="13.500" cy="4.500" r="3.300"/><circle cx="6" cy="9" r="2.800"/><path d="M8.500 17c0-4 2-6.500 5-6.500 2.500 0 4.500 1.500 5 4M1 19c0-3.500 2-5.500 5-5.500 1.200 0 2.200.4 3 1"/></svg>
<svg style="left:1623.500px;top:1050.500px" width="17" height="10" viewBox="0 0 17 10" fill="none" stroke="#fff" stroke-width="1.400"><path d="M1 9l7.500-7.500L16 9"/></svg>
<svg style="left:1651px;top:1046px" width="23" height="18" viewBox="0 0 23 18" fill="none" stroke="#fff" stroke-width="1.200"><path d="M1.500 6h3.500l4-4v14l-4-4H1.500z"/><path d="M12 6.500c1 1.500 1 3.500 0 5"/><path d="M15 4.500c2 2.800 2 6.200 0 9" stroke="#999"/><path d="M18 2.500c3 4 3 9 0 13" stroke="#666"/></svg>
<svg style="left:1686px;top:1044px" width="22" height="22" viewBox="0 0 22 22" fill="none" stroke="#fff" stroke-width="1.300"><path d="M8 19L15 3.500c.8-1.600 3.500-.6 2.800 1.200L11 20l-3.500 1z"/><path d="M2 17c-1-3 1.500-6 5-6.500 3.500-.5 9.500 1 12-2.500" /></svg>
<div class="t" style="left:1725.500px;top:1046px;font-size:13.400px;line-height:18px">ENG</div>
<div class="t" style="left:1790px;top:1035px;font-size:14.400px;line-height:18px">08:17</div>
<div class="t" style="left:1771px;top:1057.500px;font-size:15px;letter-spacing:.25px;line-height:18px">11/08/2019</div>
<svg style="left:1868px;top:1044px" width="32" height="32" viewBox="0 0 32 32"><path d="M1 1h20v15H9l-4 4v-4H1z" fill="#fff"/><path d="M4 5h14M4 8.500h14M4 12h9" stroke="#0b0b0b" stroke-width="1"/><circle cx="20" cy="20" r="9.500" fill="#0b0b0b" stroke="#8a8a8a" stroke-width="1"/><text x="20" y="25" font-size="14.500" fill="#fff" text-anchor="middle" font-family="Liberation Sans,sans-serif">1</text></svg>
<div class="abs" style="left:1915px;top:1030px;width:1px;height:50px;background:#4a4a4a"></div>
</div>
<!--/TASKBAR-->
</div>
</body>
</html>
